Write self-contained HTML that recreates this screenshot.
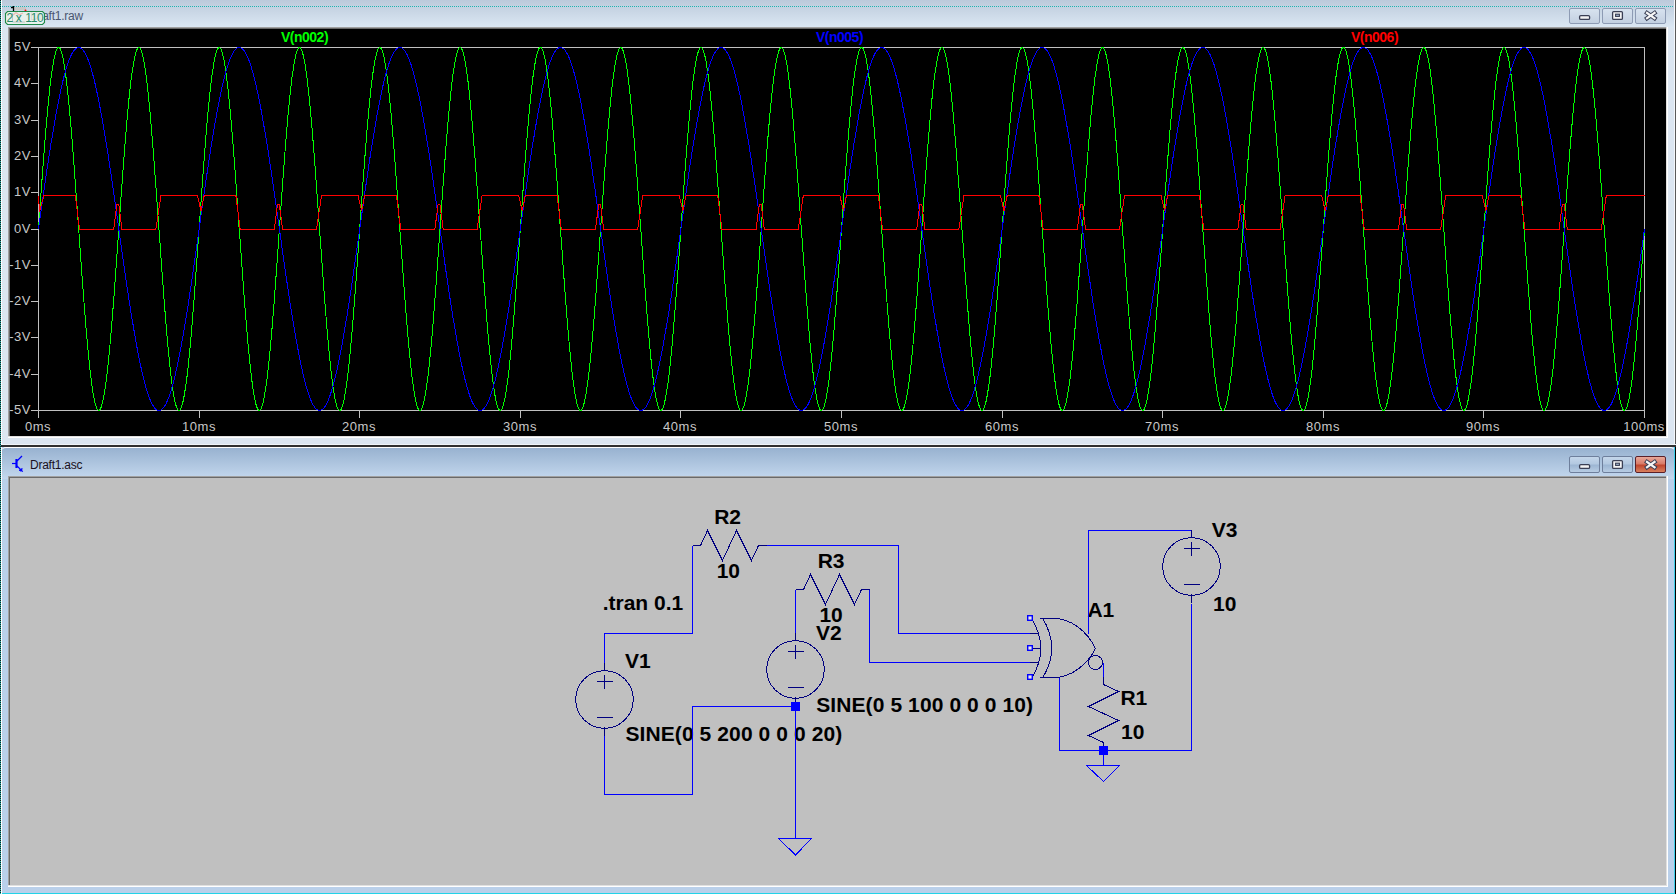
<!DOCTYPE html>
<html><head><meta charset="utf-8">
<style>
html,body{margin:0;padding:0;width:1676px;height:894px;overflow:hidden;background:#dce6f1;font-family:"Liberation Sans",sans-serif;position:relative}
.a{position:absolute}
.yl{position:absolute;right:1645px;width:40px;text-align:right;font-size:13px;line-height:16px;color:#c8c8c8;letter-spacing:0.5px}
.xl{position:absolute;top:419px;width:60px;margin-left:-30px;text-align:center;font-size:13px;line-height:16px;color:#c8c8c8;letter-spacing:0.5px}
.tb{position:absolute;top:8px;width:29px;height:14px;border:1px solid #8d9bb4;border-radius:2px;background:linear-gradient(#d7e2ef,#c3d0e1)}
.tb2{position:absolute;top:456px;width:29px;height:15px;border:1px solid #6e7f9c;border-radius:2px;background:linear-gradient(#c4d6ea 0%,#b3c9e1 45%,#9db6d3 55%,#b7cce3 100%)}
.sch{position:absolute;font-weight:bold;font-size:21px;line-height:22px;color:#000;white-space:nowrap}
</style></head><body>

<!-- ================= TOP WINDOW (waveform) ================= -->
<div class="a" style="left:0;top:0;width:1676px;height:446px;background:#dce6f1"></div>
<div class="a" style="left:0;top:0;width:1676px;height:28px;background:linear-gradient(#bccadb,#dce8f4)"></div>
<!-- dotted marquee line -->
<div class="a" style="left:2px;top:6px;width:1673px;height:1px;background:repeating-linear-gradient(90deg,#1fb5b0 0 1px,transparent 1px 2px)"></div>
<!-- title -->
<div class="a" style="left:30px;top:9px;font-size:12px;line-height:14px;color:#4a5670;letter-spacing:-0.25px">Draft1.raw</div>
<!-- app icon (partially hidden) -->
<svg class="a" style="left:8px;top:6px" width="22" height="20" viewBox="0 0 22 20">
  <rect x="6" y="1" width="12" height="3" fill="#c8c8c8"/>
  <path d="M3 1.5 H5.5 M5.5 0 V5" stroke="#000" stroke-width="1.3"/>
  <circle cx="17.5" cy="4.5" r="1" fill="#f00"/>
</svg>
<!-- screenshot size badge -->
<svg class="a" style="left:4px;top:10px" width="42" height="17" viewBox="0 0 42 17">
  <path d="M3.5 1.5 H38.5 L40.5 3.5 V12.5 L38.5 14.5 H3.5 L1.5 12.5 V3.5 Z" fill="rgba(236,244,236,0.85)" stroke="#1f8a4a" stroke-width="1.1"/>
  <path d="M9 5 L12 2.5 L15 5 L19 3" fill="none" stroke="rgba(240,150,140,0.6)" stroke-width="1.3"/>
  <path d="M8.5 3 V12 H21" fill="none" stroke="rgba(150,150,150,0.5)" stroke-width="1"/>
</svg>
<div class="a" style="left:0;top:10px;font-size:12px;line-height:16px;color:#2a8a6a;width:50px;height:16px">
<span class="a" style="left:6.6px">2</span><span class="a" style="left:15.7px">x</span><span class="a" style="left:25.2px">1</span><span class="a" style="left:30.8px">1</span><span class="a" style="left:37.1px">0</span>
</div>
<!-- buttons -->
<div class="tb" style="left:1569px"></div>
<div class="tb" style="left:1602px"></div>
<div class="tb" style="left:1635px"></div>
<svg class="a" style="left:1560px;top:0" width="116" height="28" viewBox="0 0 116 28"><rect x="19.6" y="15.6" width="10" height="3.8" rx="1.2" fill="#f4f4f4" stroke="#3a3f55" stroke-width="1.3"/><rect x="52.6" y="11.6" width="9.8" height="7.8" rx="1" fill="#f4f4f4" stroke="#3a3f55" stroke-width="1.3"/><rect x="55.6" y="14.2" width="3.8" height="2.2" fill="#a9bdd6" stroke="#3a3f55" stroke-width="1.1"/><path d="M87 12.9 L94.6 18.3 M94.6 12.9 L87 18.3" stroke="#3a3f55" stroke-width="4.2" stroke-linecap="square"/><path d="M87 12.9 L94.6 18.3 M94.6 12.9 L87 18.3" stroke="#f6f6f6" stroke-width="2.2" stroke-linecap="square"/></svg>
<!-- plot bevel -->
<div class="a" style="left:8px;top:27px;width:1660px;height:411px;background:#fff"></div>
<div class="a" style="left:8px;top:27px;width:1659px;height:410px;background:#e0e0e0"></div>
<div class="a" style="left:8px;top:27px;width:1658px;height:409px;background:#a0a0a0"></div>
<div class="a" style="left:9px;top:28px;width:1657px;height:408px;background:#696969"></div>
<div class="a" style="left:10px;top:29px;width:1656px;height:407px;background:#000"></div>
<!-- right border -->
<div class="a" style="left:1674px;top:0;width:1px;height:446px;background:#f4f7fb"></div>
<div class="a" style="left:1675px;top:0;width:1px;height:446px;background:#5a5a5a"></div>

<svg class="a" style="left:0;top:0" width="1676" height="446" viewBox="0 0 1676 446">
  <path d="M31 47.5 H1644.5 V410.5 H38.5 V47.5 M31 410.5 H38.5" fill="none" stroke="#c0c0c0" stroke-width="1" shape-rendering="crispEdges"/>
  <path d="M31 47.5 H38 M31 83.5 H38 M31 120.5 H38 M31 156.5 H38 M31 192.5 H38 M31 229.5 H38 M31 265.5 H38 M31 301.5 H38 M31 337.5 H38 M31 374.5 H38 M31 410.5 H38 M38.5 410 V418 M199.5 410 V418 M359.5 410 V418 M520.5 410 V418 M680.5 410 V418 M841.5 410 V418 M1002.5 410 V418 M1162.5 410 V418 M1323.5 410 V418 M1483.5 410 V418 M1644.5 410 V418" fill="none" stroke="#c0c0c0" stroke-width="1" shape-rendering="crispEdges"/>
  <path d="M38.5 229.0 L39.3 217.6 40.1 206.3 40.9 195.0 41.7 183.9 42.5 172.9 43.3 162.2 44.1 151.7 44.9 141.6 45.7 131.7 46.5 122.3 47.3 113.3 48.1 104.8 48.9 96.7 49.7 89.2 50.5 82.2 51.3 75.8 52.2 70.0 53.0 64.8 53.8 60.2 54.6 56.4 55.4 53.2 56.2 50.7 57.0 48.9 57.8 47.9 58.6 47.5 59.4 47.9 60.2 48.9 61.0 50.7 61.8 53.2 62.6 56.4 63.4 60.2 64.2 64.8 65.0 70.0 65.8 75.8 66.6 82.2 67.4 89.2 68.2 96.7 69.0 104.8 69.8 113.3 70.6 122.3 71.4 131.7 72.2 141.6 73.0 151.7 73.8 162.2 74.6 172.9 75.4 183.9 76.2 195.0 77.0 206.3 77.8 217.6 78.7 229.0 79.5 240.4 80.3 251.7 81.1 263.0 81.9 274.1 82.7 285.1 83.5 295.8 84.3 306.3 85.1 316.4 85.9 326.3 86.7 335.7 87.5 344.7 88.3 353.2 89.1 361.3 89.9 368.8 90.7 375.8 91.5 382.2 92.3 388.0 93.1 393.2 93.9 397.8 94.7 401.6 95.5 404.8 96.3 407.3 97.1 409.1 97.9 410.1 98.7 410.5 99.5 410.1 100.3 409.1 101.1 407.3 101.9 404.8 102.7 401.6 103.5 397.8 104.3 393.2 105.1 388.0 106.0 382.2 106.8 375.8 107.6 368.8 108.4 361.3 109.2 353.2 110.0 344.7 110.8 335.7 111.6 326.3 112.4 316.4 113.2 306.3 114.0 295.8 114.8 285.1 115.6 274.1 116.4 263.0 117.2 251.7 118.0 240.4 118.8 229.0 119.6 217.6 120.4 206.3 121.2 195.0 122.0 183.9 122.8 172.9 123.6 162.2 124.4 151.7 125.2 141.6 126.0 131.7 126.8 122.3 127.6 113.3 128.4 104.8 129.2 96.7 130.0 89.2 130.8 82.2 131.6 75.8 132.5 70.0 133.3 64.8 134.1 60.2 134.9 56.4 135.7 53.2 136.5 50.7 137.3 48.9 138.1 47.9 138.9 47.5 139.7 47.9 140.5 48.9 141.3 50.7 142.1 53.2 142.9 56.4 143.7 60.2 144.5 64.8 145.3 70.0 146.1 75.8 146.9 82.2 147.7 89.2 148.5 96.7 149.3 104.8 150.1 113.3 150.9 122.3 151.7 131.7 152.5 141.6 153.3 151.7 154.1 162.2 154.9 172.9 155.7 183.9 156.5 195.0 157.3 206.3 158.1 217.6 158.9 229.0 159.8 240.4 160.6 251.7 161.4 263.0 162.2 274.1 163.0 285.1 163.8 295.8 164.6 306.3 165.4 316.4 166.2 326.3 167.0 335.7 167.8 344.7 168.6 353.2 169.4 361.3 170.2 368.8 171.0 375.8 171.8 382.2 172.6 388.0 173.4 393.2 174.2 397.8 175.0 401.6 175.8 404.8 176.6 407.3 177.4 409.1 178.2 410.1 179.0 410.5 179.8 410.1 180.6 409.1 181.4 407.3 182.2 404.8 183.0 401.6 183.8 397.8 184.6 393.2 185.4 388.0 186.3 382.2 187.1 375.8 187.9 368.8 188.7 361.3 189.5 353.2 190.3 344.7 191.1 335.7 191.9 326.3 192.7 316.4 193.5 306.3 194.3 295.8 195.1 285.1 195.9 274.1 196.7 263.0 197.5 251.7 198.3 240.4 199.1 229.0 199.9 217.6 200.7 206.3 201.5 195.0 202.3 183.9 203.1 172.9 203.9 162.2 204.7 151.7 205.5 141.6 206.3 131.7 207.1 122.3 207.9 113.3 208.7 104.8 209.5 96.7 210.3 89.2 211.1 82.2 211.9 75.8 212.8 70.0 213.6 64.8 214.4 60.2 215.2 56.4 216.0 53.2 216.8 50.7 217.6 48.9 218.4 47.9 219.2 47.5 220.0 47.9 220.8 48.9 221.6 50.7 222.4 53.2 223.2 56.4 224.0 60.2 224.8 64.8 225.6 70.0 226.4 75.8 227.2 82.2 228.0 89.2 228.8 96.7 229.6 104.8 230.4 113.3 231.2 122.3 232.0 131.7 232.8 141.6 233.6 151.7 234.4 162.2 235.2 172.9 236.0 183.9 236.8 195.0 237.6 206.3 238.4 217.6 239.2 229.0 240.1 240.4 240.9 251.7 241.7 263.0 242.5 274.1 243.3 285.1 244.1 295.8 244.9 306.3 245.7 316.4 246.5 326.3 247.3 335.7 248.1 344.7 248.9 353.2 249.7 361.3 250.5 368.8 251.3 375.8 252.1 382.2 252.9 388.0 253.7 393.2 254.5 397.8 255.3 401.6 256.1 404.8 256.9 407.3 257.7 409.1 258.5 410.1 259.3 410.5 260.1 410.1 260.9 409.1 261.7 407.3 262.5 404.8 263.3 401.6 264.1 397.8 264.9 393.2 265.7 388.0 266.6 382.2 267.4 375.8 268.2 368.8 269.0 361.3 269.8 353.2 270.6 344.7 271.4 335.7 272.2 326.3 273.0 316.4 273.8 306.3 274.6 295.8 275.4 285.1 276.2 274.1 277.0 263.0 277.8 251.7 278.6 240.4 279.4 229.0 280.2 217.6 281.0 206.3 281.8 195.0 282.6 183.9 283.4 172.9 284.2 162.2 285.0 151.7 285.8 141.6 286.6 131.7 287.4 122.3 288.2 113.3 289.0 104.8 289.8 96.7 290.6 89.2 291.4 82.2 292.2 75.8 293.1 70.0 293.9 64.8 294.7 60.2 295.5 56.4 296.3 53.2 297.1 50.7 297.9 48.9 298.7 47.9 299.5 47.5 300.3 47.9 301.1 48.9 301.9 50.7 302.7 53.2 303.5 56.4 304.3 60.2 305.1 64.8 305.9 70.0 306.7 75.8 307.5 82.2 308.3 89.2 309.1 96.7 309.9 104.8 310.7 113.3 311.5 122.3 312.3 131.7 313.1 141.6 313.9 151.7 314.7 162.2 315.5 172.9 316.3 183.9 317.1 195.0 317.9 206.3 318.7 217.6 319.5 229.0 320.4 240.4 321.2 251.7 322.0 263.0 322.8 274.1 323.6 285.1 324.4 295.8 325.2 306.3 326.0 316.4 326.8 326.3 327.6 335.7 328.4 344.7 329.2 353.2 330.0 361.3 330.8 368.8 331.6 375.8 332.4 382.2 333.2 388.0 334.0 393.2 334.8 397.8 335.6 401.6 336.4 404.8 337.2 407.3 338.0 409.1 338.8 410.1 339.6 410.5 340.4 410.1 341.2 409.1 342.0 407.3 342.8 404.8 343.6 401.6 344.4 397.8 345.2 393.2 346.0 388.0 346.9 382.2 347.7 375.8 348.5 368.8 349.3 361.3 350.1 353.2 350.9 344.7 351.7 335.7 352.5 326.3 353.3 316.4 354.1 306.3 354.9 295.8 355.7 285.1 356.5 274.1 357.3 263.0 358.1 251.7 358.9 240.4 359.7 229.0 360.5 217.6 361.3 206.3 362.1 195.0 362.9 183.9 363.7 172.9 364.5 162.2 365.3 151.7 366.1 141.6 366.9 131.7 367.7 122.3 368.5 113.3 369.3 104.8 370.1 96.7 370.9 89.2 371.7 82.2 372.5 75.8 373.4 70.0 374.2 64.8 375.0 60.2 375.8 56.4 376.6 53.2 377.4 50.7 378.2 48.9 379.0 47.9 379.8 47.5 380.6 47.9 381.4 48.9 382.2 50.7 383.0 53.2 383.8 56.4 384.6 60.2 385.4 64.8 386.2 70.0 387.0 75.8 387.8 82.2 388.6 89.2 389.4 96.7 390.2 104.8 391.0 113.3 391.8 122.3 392.6 131.7 393.4 141.6 394.2 151.7 395.0 162.2 395.8 172.9 396.6 183.9 397.4 195.0 398.2 206.3 399.0 217.6 399.8 229.0 400.7 240.4 401.5 251.7 402.3 263.0 403.1 274.1 403.9 285.1 404.7 295.8 405.5 306.3 406.3 316.4 407.1 326.3 407.9 335.7 408.7 344.7 409.5 353.2 410.3 361.3 411.1 368.8 411.9 375.8 412.7 382.2 413.5 388.0 414.3 393.2 415.1 397.8 415.9 401.6 416.7 404.8 417.5 407.3 418.3 409.1 419.1 410.1 419.9 410.5 420.7 410.1 421.5 409.1 422.3 407.3 423.1 404.8 423.9 401.6 424.7 397.8 425.5 393.2 426.3 388.0 427.2 382.2 428.0 375.8 428.8 368.8 429.6 361.3 430.4 353.2 431.2 344.7 432.0 335.7 432.8 326.3 433.6 316.4 434.4 306.3 435.2 295.8 436.0 285.1 436.8 274.1 437.6 263.0 438.4 251.7 439.2 240.4 440.0 229.0 440.8 217.6 441.6 206.3 442.4 195.0 443.2 183.9 444.0 172.9 444.8 162.2 445.6 151.7 446.4 141.6 447.2 131.7 448.0 122.3 448.8 113.3 449.6 104.8 450.4 96.7 451.2 89.2 452.0 82.2 452.8 75.8 453.7 70.0 454.5 64.8 455.3 60.2 456.1 56.4 456.9 53.2 457.7 50.7 458.5 48.9 459.3 47.9 460.1 47.5 460.9 47.9 461.7 48.9 462.5 50.7 463.3 53.2 464.1 56.4 464.9 60.2 465.7 64.8 466.5 70.0 467.3 75.8 468.1 82.2 468.9 89.2 469.7 96.7 470.5 104.8 471.3 113.3 472.1 122.3 472.9 131.7 473.7 141.6 474.5 151.7 475.3 162.2 476.1 172.9 476.9 183.9 477.7 195.0 478.5 206.3 479.3 217.6 480.1 229.0 481.0 240.4 481.8 251.7 482.6 263.0 483.4 274.1 484.2 285.1 485.0 295.8 485.8 306.3 486.6 316.4 487.4 326.3 488.2 335.7 489.0 344.7 489.8 353.2 490.6 361.3 491.4 368.8 492.2 375.8 493.0 382.2 493.8 388.0 494.6 393.2 495.4 397.8 496.2 401.6 497.0 404.8 497.8 407.3 498.6 409.1 499.4 410.1 500.2 410.5 501.0 410.1 501.8 409.1 502.6 407.3 503.4 404.8 504.2 401.6 505.0 397.8 505.8 393.2 506.6 388.0 507.5 382.2 508.3 375.8 509.1 368.8 509.9 361.3 510.7 353.2 511.5 344.7 512.3 335.7 513.1 326.3 513.9 316.4 514.7 306.3 515.5 295.8 516.3 285.1 517.1 274.1 517.9 263.0 518.7 251.7 519.5 240.4 520.3 229.0 521.1 217.6 521.9 206.3 522.7 195.0 523.5 183.9 524.3 172.9 525.1 162.2 525.9 151.7 526.7 141.6 527.5 131.7 528.3 122.3 529.1 113.3 529.9 104.8 530.7 96.7 531.5 89.2 532.3 82.2 533.1 75.8 534.0 70.0 534.8 64.8 535.6 60.2 536.4 56.4 537.2 53.2 538.0 50.7 538.8 48.9 539.6 47.9 540.4 47.5 541.2 47.9 542.0 48.9 542.8 50.7 543.6 53.2 544.4 56.4 545.2 60.2 546.0 64.8 546.8 70.0 547.6 75.8 548.4 82.2 549.2 89.2 550.0 96.7 550.8 104.8 551.6 113.3 552.4 122.3 553.2 131.7 554.0 141.6 554.8 151.7 555.6 162.2 556.4 172.9 557.2 183.9 558.0 195.0 558.8 206.3 559.6 217.6 560.4 229.0 561.3 240.4 562.1 251.7 562.9 263.0 563.7 274.1 564.5 285.1 565.3 295.8 566.1 306.3 566.9 316.4 567.7 326.3 568.5 335.7 569.3 344.7 570.1 353.2 570.9 361.3 571.7 368.8 572.5 375.8 573.3 382.2 574.1 388.0 574.9 393.2 575.7 397.8 576.5 401.6 577.3 404.8 578.1 407.3 578.9 409.1 579.7 410.1 580.5 410.5 581.3 410.1 582.1 409.1 582.9 407.3 583.7 404.8 584.5 401.6 585.3 397.8 586.1 393.2 586.9 388.0 587.8 382.2 588.6 375.8 589.4 368.8 590.2 361.3 591.0 353.2 591.8 344.7 592.6 335.7 593.4 326.3 594.2 316.4 595.0 306.3 595.8 295.8 596.6 285.1 597.4 274.1 598.2 263.0 599.0 251.7 599.8 240.4 600.6 229.0 601.4 217.6 602.2 206.3 603.0 195.0 603.8 183.9 604.6 172.9 605.4 162.2 606.2 151.7 607.0 141.6 607.8 131.7 608.6 122.3 609.4 113.3 610.2 104.8 611.0 96.7 611.8 89.2 612.6 82.2 613.4 75.8 614.3 70.0 615.1 64.8 615.9 60.2 616.7 56.4 617.5 53.2 618.3 50.7 619.1 48.9 619.9 47.9 620.7 47.5 621.5 47.9 622.3 48.9 623.1 50.7 623.9 53.2 624.7 56.4 625.5 60.2 626.3 64.8 627.1 70.0 627.9 75.8 628.7 82.2 629.5 89.2 630.3 96.7 631.1 104.8 631.9 113.3 632.7 122.3 633.5 131.7 634.3 141.6 635.1 151.7 635.9 162.2 636.7 172.9 637.5 183.9 638.3 195.0 639.1 206.3 639.9 217.6 640.8 229.0 641.6 240.4 642.4 251.7 643.2 263.0 644.0 274.1 644.8 285.1 645.6 295.8 646.4 306.3 647.2 316.4 648.0 326.3 648.8 335.7 649.6 344.7 650.4 353.2 651.2 361.3 652.0 368.8 652.8 375.8 653.6 382.2 654.4 388.0 655.2 393.2 656.0 397.8 656.8 401.6 657.6 404.8 658.4 407.3 659.2 409.1 660.0 410.1 660.8 410.5 661.6 410.1 662.4 409.1 663.2 407.3 664.0 404.8 664.8 401.6 665.6 397.8 666.4 393.2 667.2 388.0 668.1 382.2 668.9 375.8 669.7 368.8 670.5 361.3 671.3 353.2 672.1 344.7 672.9 335.7 673.7 326.3 674.5 316.4 675.3 306.3 676.1 295.8 676.9 285.1 677.7 274.1 678.5 263.0 679.3 251.7 680.1 240.4 680.9 229.0 681.7 217.6 682.5 206.3 683.3 195.0 684.1 183.9 684.9 172.9 685.7 162.2 686.5 151.7 687.3 141.6 688.1 131.7 688.9 122.3 689.7 113.3 690.5 104.8 691.3 96.7 692.1 89.2 692.9 82.2 693.7 75.8 694.6 70.0 695.4 64.8 696.2 60.2 697.0 56.4 697.8 53.2 698.6 50.7 699.4 48.9 700.2 47.9 701.0 47.5 701.8 47.9 702.6 48.9 703.4 50.7 704.2 53.2 705.0 56.4 705.8 60.2 706.6 64.8 707.4 70.0 708.2 75.8 709.0 82.2 709.8 89.2 710.6 96.7 711.4 104.8 712.2 113.3 713.0 122.3 713.8 131.7 714.6 141.6 715.4 151.7 716.2 162.2 717.0 172.9 717.8 183.9 718.6 195.0 719.4 206.3 720.2 217.6 721.0 229.0 721.9 240.4 722.7 251.7 723.5 263.0 724.3 274.1 725.1 285.1 725.9 295.8 726.7 306.3 727.5 316.4 728.3 326.3 729.1 335.7 729.9 344.7 730.7 353.2 731.5 361.3 732.3 368.8 733.1 375.8 733.9 382.2 734.7 388.0 735.5 393.2 736.3 397.8 737.1 401.6 737.9 404.8 738.7 407.3 739.5 409.1 740.3 410.1 741.1 410.5 741.9 410.1 742.7 409.1 743.5 407.3 744.3 404.8 745.1 401.6 745.9 397.8 746.7 393.2 747.5 388.0 748.4 382.2 749.2 375.8 750.0 368.8 750.8 361.3 751.6 353.2 752.4 344.7 753.2 335.7 754.0 326.3 754.8 316.4 755.6 306.3 756.4 295.8 757.2 285.1 758.0 274.1 758.8 263.0 759.6 251.7 760.4 240.4 761.2 229.0 762.0 217.6 762.8 206.3 763.6 195.0 764.4 183.9 765.2 172.9 766.0 162.2 766.8 151.7 767.6 141.6 768.4 131.7 769.2 122.3 770.0 113.3 770.8 104.8 771.6 96.7 772.4 89.2 773.2 82.2 774.0 75.8 774.9 70.0 775.7 64.8 776.5 60.2 777.3 56.4 778.1 53.2 778.9 50.7 779.7 48.9 780.5 47.9 781.3 47.5 782.1 47.9 782.9 48.9 783.7 50.7 784.5 53.2 785.3 56.4 786.1 60.2 786.9 64.8 787.7 70.0 788.5 75.8 789.3 82.2 790.1 89.2 790.9 96.7 791.7 104.8 792.5 113.3 793.3 122.3 794.1 131.7 794.9 141.6 795.7 151.7 796.5 162.2 797.3 172.9 798.1 183.9 798.9 195.0 799.7 206.3 800.5 217.6 801.3 229.0 802.2 240.4 803.0 251.7 803.8 263.0 804.6 274.1 805.4 285.1 806.2 295.8 807.0 306.3 807.8 316.4 808.6 326.3 809.4 335.7 810.2 344.7 811.0 353.2 811.8 361.3 812.6 368.8 813.4 375.8 814.2 382.2 815.0 388.0 815.8 393.2 816.6 397.8 817.4 401.6 818.2 404.8 819.0 407.3 819.8 409.1 820.6 410.1 821.4 410.5 822.2 410.1 823.0 409.1 823.8 407.3 824.6 404.8 825.4 401.6 826.2 397.8 827.0 393.2 827.8 388.0 828.7 382.2 829.5 375.8 830.3 368.8 831.1 361.3 831.9 353.2 832.7 344.7 833.5 335.7 834.3 326.3 835.1 316.4 835.9 306.3 836.7 295.8 837.5 285.1 838.3 274.1 839.1 263.0 839.9 251.7 840.7 240.4 841.5 229.0 842.3 217.6 843.1 206.3 843.9 195.0 844.7 183.9 845.5 172.9 846.3 162.2 847.1 151.7 847.9 141.6 848.7 131.7 849.5 122.3 850.3 113.3 851.1 104.8 851.9 96.7 852.7 89.2 853.5 82.2 854.3 75.8 855.2 70.0 856.0 64.8 856.8 60.2 857.6 56.4 858.4 53.2 859.2 50.7 860.0 48.9 860.8 47.9 861.6 47.5 862.4 47.9 863.2 48.9 864.0 50.7 864.8 53.2 865.6 56.4 866.4 60.2 867.2 64.8 868.0 70.0 868.8 75.8 869.6 82.2 870.4 89.2 871.2 96.7 872.0 104.8 872.8 113.3 873.6 122.3 874.4 131.7 875.2 141.6 876.0 151.7 876.8 162.2 877.6 172.9 878.4 183.9 879.2 195.0 880.0 206.3 880.8 217.6 881.6 229.0 882.5 240.4 883.3 251.7 884.1 263.0 884.9 274.1 885.7 285.1 886.5 295.8 887.3 306.3 888.1 316.4 888.9 326.3 889.7 335.7 890.5 344.7 891.3 353.2 892.1 361.3 892.9 368.8 893.7 375.8 894.5 382.2 895.3 388.0 896.1 393.2 896.9 397.8 897.7 401.6 898.5 404.8 899.3 407.3 900.1 409.1 900.9 410.1 901.7 410.5 902.5 410.1 903.3 409.1 904.1 407.3 904.9 404.8 905.7 401.6 906.5 397.8 907.3 393.2 908.1 388.0 909.0 382.2 909.8 375.8 910.6 368.8 911.4 361.3 912.2 353.2 913.0 344.7 913.8 335.7 914.6 326.3 915.4 316.4 916.2 306.3 917.0 295.8 917.8 285.1 918.6 274.1 919.4 263.0 920.2 251.7 921.0 240.4 921.8 229.0 922.6 217.6 923.4 206.3 924.2 195.0 925.0 183.9 925.8 172.9 926.6 162.2 927.4 151.7 928.2 141.6 929.0 131.7 929.8 122.3 930.6 113.3 931.4 104.8 932.2 96.7 933.0 89.2 933.8 82.2 934.6 75.8 935.5 70.0 936.3 64.8 937.1 60.2 937.9 56.4 938.7 53.2 939.5 50.7 940.3 48.9 941.1 47.9 941.9 47.5 942.7 47.9 943.5 48.9 944.3 50.7 945.1 53.2 945.9 56.4 946.7 60.2 947.5 64.8 948.3 70.0 949.1 75.8 949.9 82.2 950.7 89.2 951.5 96.7 952.3 104.8 953.1 113.3 953.9 122.3 954.7 131.7 955.5 141.6 956.3 151.7 957.1 162.2 957.9 172.9 958.7 183.9 959.5 195.0 960.3 206.3 961.1 217.6 961.9 229.0 962.8 240.4 963.6 251.7 964.4 263.0 965.2 274.1 966.0 285.1 966.8 295.8 967.6 306.3 968.4 316.4 969.2 326.3 970.0 335.7 970.8 344.7 971.6 353.2 972.4 361.3 973.2 368.8 974.0 375.8 974.8 382.2 975.6 388.0 976.4 393.2 977.2 397.8 978.0 401.6 978.8 404.8 979.6 407.3 980.4 409.1 981.2 410.1 982.0 410.5 982.8 410.1 983.6 409.1 984.4 407.3 985.2 404.8 986.0 401.6 986.8 397.8 987.6 393.2 988.4 388.0 989.3 382.2 990.1 375.8 990.9 368.8 991.7 361.3 992.5 353.2 993.3 344.7 994.1 335.7 994.9 326.3 995.7 316.4 996.5 306.3 997.3 295.8 998.1 285.1 998.9 274.1 999.7 263.0 1000.5 251.7 1001.3 240.4 1002.1 229.0 1002.9 217.6 1003.7 206.3 1004.5 195.0 1005.3 183.9 1006.1 172.9 1006.9 162.2 1007.7 151.7 1008.5 141.6 1009.3 131.7 1010.1 122.3 1010.9 113.3 1011.7 104.8 1012.5 96.7 1013.3 89.2 1014.1 82.2 1014.9 75.8 1015.8 70.0 1016.6 64.8 1017.4 60.2 1018.2 56.4 1019.0 53.2 1019.8 50.7 1020.6 48.9 1021.4 47.9 1022.2 47.5 1023.0 47.9 1023.8 48.9 1024.6 50.7 1025.4 53.2 1026.2 56.4 1027.0 60.2 1027.8 64.8 1028.6 70.0 1029.4 75.8 1030.2 82.2 1031.0 89.2 1031.8 96.7 1032.6 104.8 1033.4 113.3 1034.2 122.3 1035.0 131.7 1035.8 141.6 1036.6 151.7 1037.4 162.2 1038.2 172.9 1039.0 183.9 1039.8 195.0 1040.6 206.3 1041.4 217.6 1042.2 229.0 1043.1 240.4 1043.9 251.7 1044.7 263.0 1045.5 274.1 1046.3 285.1 1047.1 295.8 1047.9 306.3 1048.7 316.4 1049.5 326.3 1050.3 335.7 1051.1 344.7 1051.9 353.2 1052.7 361.3 1053.5 368.8 1054.3 375.8 1055.1 382.2 1055.9 388.0 1056.7 393.2 1057.5 397.8 1058.3 401.6 1059.1 404.8 1059.9 407.3 1060.7 409.1 1061.5 410.1 1062.3 410.5 1063.1 410.1 1063.9 409.1 1064.7 407.3 1065.5 404.8 1066.3 401.6 1067.1 397.8 1067.9 393.2 1068.7 388.0 1069.6 382.2 1070.4 375.8 1071.2 368.8 1072.0 361.3 1072.8 353.2 1073.6 344.7 1074.4 335.7 1075.2 326.3 1076.0 316.4 1076.8 306.3 1077.6 295.8 1078.4 285.1 1079.2 274.1 1080.0 263.0 1080.8 251.7 1081.6 240.4 1082.4 229.0 1083.2 217.6 1084.0 206.3 1084.8 195.0 1085.6 183.9 1086.4 172.9 1087.2 162.2 1088.0 151.7 1088.8 141.6 1089.6 131.7 1090.4 122.3 1091.2 113.3 1092.0 104.8 1092.8 96.7 1093.6 89.2 1094.4 82.2 1095.2 75.8 1096.1 70.0 1096.9 64.8 1097.7 60.2 1098.5 56.4 1099.3 53.2 1100.1 50.7 1100.9 48.9 1101.7 47.9 1102.5 47.5 1103.3 47.9 1104.1 48.9 1104.9 50.7 1105.7 53.2 1106.5 56.4 1107.3 60.2 1108.1 64.8 1108.9 70.0 1109.7 75.8 1110.5 82.2 1111.3 89.2 1112.1 96.7 1112.9 104.8 1113.7 113.3 1114.5 122.3 1115.3 131.7 1116.1 141.6 1116.9 151.7 1117.7 162.2 1118.5 172.9 1119.3 183.9 1120.1 195.0 1120.9 206.3 1121.7 217.6 1122.5 229.0 1123.4 240.4 1124.2 251.7 1125.0 263.0 1125.8 274.1 1126.6 285.1 1127.4 295.8 1128.2 306.3 1129.0 316.4 1129.8 326.3 1130.6 335.7 1131.4 344.7 1132.2 353.2 1133.0 361.3 1133.8 368.8 1134.6 375.8 1135.4 382.2 1136.2 388.0 1137.0 393.2 1137.8 397.8 1138.6 401.6 1139.4 404.8 1140.2 407.3 1141.0 409.1 1141.8 410.1 1142.6 410.5 1143.4 410.1 1144.2 409.1 1145.0 407.3 1145.8 404.8 1146.6 401.6 1147.4 397.8 1148.2 393.2 1149.0 388.0 1149.9 382.2 1150.7 375.8 1151.5 368.8 1152.3 361.3 1153.1 353.2 1153.9 344.7 1154.7 335.7 1155.5 326.3 1156.3 316.4 1157.1 306.3 1157.9 295.8 1158.7 285.1 1159.5 274.1 1160.3 263.0 1161.1 251.7 1161.9 240.4 1162.7 229.0 1163.5 217.6 1164.3 206.3 1165.1 195.0 1165.9 183.9 1166.7 172.9 1167.5 162.2 1168.3 151.7 1169.1 141.6 1169.9 131.7 1170.7 122.3 1171.5 113.3 1172.3 104.8 1173.1 96.7 1173.9 89.2 1174.7 82.2 1175.5 75.8 1176.4 70.0 1177.2 64.8 1178.0 60.2 1178.8 56.4 1179.6 53.2 1180.4 50.7 1181.2 48.9 1182.0 47.9 1182.8 47.5 1183.6 47.9 1184.4 48.9 1185.2 50.7 1186.0 53.2 1186.8 56.4 1187.6 60.2 1188.4 64.8 1189.2 70.0 1190.0 75.8 1190.8 82.2 1191.6 89.2 1192.4 96.7 1193.2 104.8 1194.0 113.3 1194.8 122.3 1195.6 131.7 1196.4 141.6 1197.2 151.7 1198.0 162.2 1198.8 172.9 1199.6 183.9 1200.4 195.0 1201.2 206.3 1202.0 217.6 1202.8 229.0 1203.7 240.4 1204.5 251.7 1205.3 263.0 1206.1 274.1 1206.9 285.1 1207.7 295.8 1208.5 306.3 1209.3 316.4 1210.1 326.3 1210.9 335.7 1211.7 344.7 1212.5 353.2 1213.3 361.3 1214.1 368.8 1214.9 375.8 1215.7 382.2 1216.5 388.0 1217.3 393.2 1218.1 397.8 1218.9 401.6 1219.7 404.8 1220.5 407.3 1221.3 409.1 1222.1 410.1 1222.9 410.5 1223.7 410.1 1224.5 409.1 1225.3 407.3 1226.1 404.8 1226.9 401.6 1227.7 397.8 1228.5 393.2 1229.3 388.0 1230.2 382.2 1231.0 375.8 1231.8 368.8 1232.6 361.3 1233.4 353.2 1234.2 344.7 1235.0 335.7 1235.8 326.3 1236.6 316.4 1237.4 306.3 1238.2 295.8 1239.0 285.1 1239.8 274.1 1240.6 263.0 1241.4 251.7 1242.2 240.4 1243.0 229.0 1243.8 217.6 1244.6 206.3 1245.4 195.0 1246.2 183.9 1247.0 172.9 1247.8 162.2 1248.6 151.7 1249.4 141.6 1250.2 131.7 1251.0 122.3 1251.8 113.3 1252.6 104.8 1253.4 96.7 1254.2 89.2 1255.0 82.2 1255.8 75.8 1256.7 70.0 1257.5 64.8 1258.3 60.2 1259.1 56.4 1259.9 53.2 1260.7 50.7 1261.5 48.9 1262.3 47.9 1263.1 47.5 1263.9 47.9 1264.7 48.9 1265.5 50.7 1266.3 53.2 1267.1 56.4 1267.9 60.2 1268.7 64.8 1269.5 70.0 1270.3 75.8 1271.1 82.2 1271.9 89.2 1272.7 96.7 1273.5 104.8 1274.3 113.3 1275.1 122.3 1275.9 131.7 1276.7 141.6 1277.5 151.7 1278.3 162.2 1279.1 172.9 1279.9 183.9 1280.7 195.0 1281.5 206.3 1282.3 217.6 1283.1 229.0 1284.0 240.4 1284.8 251.7 1285.6 263.0 1286.4 274.1 1287.2 285.1 1288.0 295.8 1288.8 306.3 1289.6 316.4 1290.4 326.3 1291.2 335.7 1292.0 344.7 1292.8 353.2 1293.6 361.3 1294.4 368.8 1295.2 375.8 1296.0 382.2 1296.8 388.0 1297.6 393.2 1298.4 397.8 1299.2 401.6 1300.0 404.8 1300.8 407.3 1301.6 409.1 1302.4 410.1 1303.2 410.5 1304.0 410.1 1304.8 409.1 1305.6 407.3 1306.4 404.8 1307.2 401.6 1308.0 397.8 1308.8 393.2 1309.6 388.0 1310.5 382.2 1311.3 375.8 1312.1 368.8 1312.9 361.3 1313.7 353.2 1314.5 344.7 1315.3 335.7 1316.1 326.3 1316.9 316.4 1317.7 306.3 1318.5 295.8 1319.3 285.1 1320.1 274.1 1320.9 263.0 1321.7 251.7 1322.5 240.4 1323.3 229.0 1324.1 217.6 1324.9 206.3 1325.7 195.0 1326.5 183.9 1327.3 172.9 1328.1 162.2 1328.9 151.7 1329.7 141.6 1330.5 131.7 1331.3 122.3 1332.1 113.3 1332.9 104.8 1333.7 96.7 1334.5 89.2 1335.3 82.2 1336.1 75.8 1337.0 70.0 1337.8 64.8 1338.6 60.2 1339.4 56.4 1340.2 53.2 1341.0 50.7 1341.8 48.9 1342.6 47.9 1343.4 47.5 1344.2 47.9 1345.0 48.9 1345.8 50.7 1346.6 53.2 1347.4 56.4 1348.2 60.2 1349.0 64.8 1349.8 70.0 1350.6 75.8 1351.4 82.2 1352.2 89.2 1353.0 96.7 1353.8 104.8 1354.6 113.3 1355.4 122.3 1356.2 131.7 1357.0 141.6 1357.8 151.7 1358.6 162.2 1359.4 172.9 1360.2 183.9 1361.0 195.0 1361.8 206.3 1362.6 217.6 1363.4 229.0 1364.3 240.4 1365.1 251.7 1365.9 263.0 1366.7 274.1 1367.5 285.1 1368.3 295.8 1369.1 306.3 1369.9 316.4 1370.7 326.3 1371.5 335.7 1372.3 344.7 1373.1 353.2 1373.9 361.3 1374.7 368.8 1375.5 375.8 1376.3 382.2 1377.1 388.0 1377.9 393.2 1378.7 397.8 1379.5 401.6 1380.3 404.8 1381.1 407.3 1381.9 409.1 1382.7 410.1 1383.5 410.5 1384.3 410.1 1385.1 409.1 1385.9 407.3 1386.7 404.8 1387.5 401.6 1388.3 397.8 1389.1 393.2 1389.9 388.0 1390.8 382.2 1391.6 375.8 1392.4 368.8 1393.2 361.3 1394.0 353.2 1394.8 344.7 1395.6 335.7 1396.4 326.3 1397.2 316.4 1398.0 306.3 1398.8 295.8 1399.6 285.1 1400.4 274.1 1401.2 263.0 1402.0 251.7 1402.8 240.4 1403.6 229.0 1404.4 217.6 1405.2 206.3 1406.0 195.0 1406.8 183.9 1407.6 172.9 1408.4 162.2 1409.2 151.7 1410.0 141.6 1410.8 131.7 1411.6 122.3 1412.4 113.3 1413.2 104.8 1414.0 96.7 1414.8 89.2 1415.6 82.2 1416.4 75.8 1417.3 70.0 1418.1 64.8 1418.9 60.2 1419.7 56.4 1420.5 53.2 1421.3 50.7 1422.1 48.9 1422.9 47.9 1423.7 47.5 1424.5 47.9 1425.3 48.9 1426.1 50.7 1426.9 53.2 1427.7 56.4 1428.5 60.2 1429.3 64.8 1430.1 70.0 1430.9 75.8 1431.7 82.2 1432.5 89.2 1433.3 96.7 1434.1 104.8 1434.9 113.3 1435.7 122.3 1436.5 131.7 1437.3 141.6 1438.1 151.7 1438.9 162.2 1439.7 172.9 1440.5 183.9 1441.3 195.0 1442.1 206.3 1442.9 217.6 1443.8 229.0 1444.6 240.4 1445.4 251.7 1446.2 263.0 1447.0 274.1 1447.8 285.1 1448.6 295.8 1449.4 306.3 1450.2 316.4 1451.0 326.3 1451.8 335.7 1452.6 344.7 1453.4 353.2 1454.2 361.3 1455.0 368.8 1455.8 375.8 1456.6 382.2 1457.4 388.0 1458.2 393.2 1459.0 397.8 1459.8 401.6 1460.6 404.8 1461.4 407.3 1462.2 409.1 1463.0 410.1 1463.8 410.5 1464.6 410.1 1465.4 409.1 1466.2 407.3 1467.0 404.8 1467.8 401.6 1468.6 397.8 1469.4 393.2 1470.2 388.0 1471.1 382.2 1471.9 375.8 1472.7 368.8 1473.5 361.3 1474.3 353.2 1475.1 344.7 1475.9 335.7 1476.7 326.3 1477.5 316.4 1478.3 306.3 1479.1 295.8 1479.9 285.1 1480.7 274.1 1481.5 263.0 1482.3 251.7 1483.1 240.4 1483.9 229.0 1484.7 217.6 1485.5 206.3 1486.3 195.0 1487.1 183.9 1487.9 172.9 1488.7 162.2 1489.5 151.7 1490.3 141.6 1491.1 131.7 1491.9 122.3 1492.7 113.3 1493.5 104.8 1494.3 96.7 1495.1 89.2 1495.9 82.2 1496.7 75.8 1497.6 70.0 1498.4 64.8 1499.2 60.2 1500.0 56.4 1500.8 53.2 1501.6 50.7 1502.4 48.9 1503.2 47.9 1504.0 47.5 1504.8 47.9 1505.6 48.9 1506.4 50.7 1507.2 53.2 1508.0 56.4 1508.8 60.2 1509.6 64.8 1510.4 70.0 1511.2 75.8 1512.0 82.2 1512.8 89.2 1513.6 96.7 1514.4 104.8 1515.2 113.3 1516.0 122.3 1516.8 131.7 1517.6 141.6 1518.4 151.7 1519.2 162.2 1520.0 172.9 1520.8 183.9 1521.6 195.0 1522.4 206.3 1523.2 217.6 1524.0 229.0 1524.9 240.4 1525.7 251.7 1526.5 263.0 1527.3 274.1 1528.1 285.1 1528.9 295.8 1529.7 306.3 1530.5 316.4 1531.3 326.3 1532.1 335.7 1532.9 344.7 1533.7 353.2 1534.5 361.3 1535.3 368.8 1536.1 375.8 1536.9 382.2 1537.7 388.0 1538.5 393.2 1539.3 397.8 1540.1 401.6 1540.9 404.8 1541.7 407.3 1542.5 409.1 1543.3 410.1 1544.1 410.5 1544.9 410.1 1545.7 409.1 1546.5 407.3 1547.3 404.8 1548.1 401.6 1548.9 397.8 1549.7 393.2 1550.5 388.0 1551.4 382.2 1552.2 375.8 1553.0 368.8 1553.8 361.3 1554.6 353.2 1555.4 344.7 1556.2 335.7 1557.0 326.3 1557.8 316.4 1558.6 306.3 1559.4 295.8 1560.2 285.1 1561.0 274.1 1561.8 263.0 1562.6 251.7 1563.4 240.4 1564.2 229.0 1565.0 217.6 1565.8 206.3 1566.6 195.0 1567.4 183.9 1568.2 172.9 1569.0 162.2 1569.8 151.7 1570.6 141.6 1571.4 131.7 1572.2 122.3 1573.0 113.3 1573.8 104.8 1574.6 96.7 1575.4 89.2 1576.2 82.2 1577.0 75.8 1577.9 70.0 1578.7 64.8 1579.5 60.2 1580.3 56.4 1581.1 53.2 1581.9 50.7 1582.7 48.9 1583.5 47.9 1584.3 47.5 1585.1 47.9 1585.9 48.9 1586.7 50.7 1587.5 53.2 1588.3 56.4 1589.1 60.2 1589.9 64.8 1590.7 70.0 1591.5 75.8 1592.3 82.2 1593.1 89.2 1593.9 96.7 1594.7 104.8 1595.5 113.3 1596.3 122.3 1597.1 131.7 1597.9 141.6 1598.7 151.7 1599.5 162.2 1600.3 172.9 1601.1 183.9 1601.9 195.0 1602.7 206.3 1603.5 217.6 1604.3 229.0 1605.2 240.4 1606.0 251.7 1606.8 263.0 1607.6 274.1 1608.4 285.1 1609.2 295.8 1610.0 306.3 1610.8 316.4 1611.6 326.3 1612.4 335.7 1613.2 344.7 1614.0 353.2 1614.8 361.3 1615.6 368.8 1616.4 375.8 1617.2 382.2 1618.0 388.0 1618.8 393.2 1619.6 397.8 1620.4 401.6 1621.2 404.8 1622.0 407.3 1622.8 409.1 1623.6 410.1 1624.4 410.5 1625.2 410.1 1626.0 409.1 1626.8 407.3 1627.6 404.8 1628.4 401.6 1629.2 397.8 1630.0 393.2 1630.8 388.0 1631.7 382.2 1632.5 375.8 1633.3 368.8 1634.1 361.3 1634.9 353.2 1635.7 344.7 1636.5 335.7 1637.3 326.3 1638.1 316.4 1638.9 306.3 1639.7 295.8 1640.5 285.1 1641.3 274.1 1642.1 263.0 1642.9 251.7 1643.7 240.4 1644.5 229.0" fill="none" stroke="#00ff00" stroke-width="1" shape-rendering="crispEdges"/>
  <path d="M38.5 229.0 L39.3 223.3 40.1 217.6 40.9 211.9 41.7 206.3 42.5 200.6 43.3 195.0 44.1 189.4 44.9 183.9 45.7 178.4 46.5 172.9 47.3 167.5 48.1 162.2 48.9 156.9 49.7 151.7 50.5 146.6 51.3 141.6 52.2 136.6 53.0 131.7 53.8 127.0 54.6 122.3 55.4 117.8 56.2 113.3 57.0 109.0 57.8 104.8 58.6 100.7 59.4 96.7 60.2 92.9 61.0 89.2 61.8 85.6 62.6 82.2 63.4 78.9 64.2 75.8 65.0 72.8 65.8 70.0 66.6 67.3 67.4 64.8 68.2 62.4 69.0 60.2 69.8 58.2 70.6 56.4 71.4 54.7 72.2 53.2 73.0 51.9 73.8 50.7 74.6 49.7 75.4 48.9 76.2 48.3 77.0 47.9 77.8 47.6 78.7 47.5 79.5 47.6 80.3 47.9 81.1 48.3 81.9 48.9 82.7 49.7 83.5 50.7 84.3 51.9 85.1 53.2 85.9 54.7 86.7 56.4 87.5 58.2 88.3 60.2 89.1 62.4 89.9 64.8 90.7 67.3 91.5 70.0 92.3 72.8 93.1 75.8 93.9 78.9 94.7 82.2 95.5 85.6 96.3 89.2 97.1 92.9 97.9 96.7 98.7 100.7 99.5 104.8 100.3 109.0 101.1 113.3 101.9 117.8 102.7 122.3 103.5 127.0 104.3 131.7 105.1 136.6 106.0 141.6 106.8 146.6 107.6 151.7 108.4 156.9 109.2 162.2 110.0 167.5 110.8 172.9 111.6 178.4 112.4 183.9 113.2 189.4 114.0 195.0 114.8 200.6 115.6 206.3 116.4 211.9 117.2 217.6 118.0 223.3 118.8 229.0 119.6 234.7 120.4 240.4 121.2 246.1 122.0 251.7 122.8 257.4 123.6 263.0 124.4 268.6 125.2 274.1 126.0 279.6 126.8 285.1 127.6 290.5 128.4 295.8 129.2 301.1 130.0 306.3 130.8 311.4 131.6 316.4 132.5 321.4 133.3 326.3 134.1 331.0 134.9 335.7 135.7 340.2 136.5 344.7 137.3 349.0 138.1 353.2 138.9 357.3 139.7 361.3 140.5 365.1 141.3 368.8 142.1 372.4 142.9 375.8 143.7 379.1 144.5 382.2 145.3 385.2 146.1 388.0 146.9 390.7 147.7 393.2 148.5 395.6 149.3 397.8 150.1 399.8 150.9 401.6 151.7 403.3 152.5 404.8 153.3 406.1 154.1 407.3 154.9 408.3 155.7 409.1 156.5 409.7 157.3 410.1 158.1 410.4 158.9 410.5 159.8 410.4 160.6 410.1 161.4 409.7 162.2 409.1 163.0 408.3 163.8 407.3 164.6 406.1 165.4 404.8 166.2 403.3 167.0 401.6 167.8 399.8 168.6 397.8 169.4 395.6 170.2 393.2 171.0 390.7 171.8 388.0 172.6 385.2 173.4 382.2 174.2 379.1 175.0 375.8 175.8 372.4 176.6 368.8 177.4 365.1 178.2 361.3 179.0 357.3 179.8 353.2 180.6 349.0 181.4 344.7 182.2 340.2 183.0 335.7 183.8 331.0 184.6 326.3 185.4 321.4 186.3 316.4 187.1 311.4 187.9 306.3 188.7 301.1 189.5 295.8 190.3 290.5 191.1 285.1 191.9 279.6 192.7 274.1 193.5 268.6 194.3 263.0 195.1 257.4 195.9 251.7 196.7 246.1 197.5 240.4 198.3 234.7 199.1 229.0 199.9 223.3 200.7 217.6 201.5 211.9 202.3 206.3 203.1 200.6 203.9 195.0 204.7 189.4 205.5 183.9 206.3 178.4 207.1 172.9 207.9 167.5 208.7 162.2 209.5 156.9 210.3 151.7 211.1 146.6 211.9 141.6 212.8 136.6 213.6 131.7 214.4 127.0 215.2 122.3 216.0 117.8 216.8 113.3 217.6 109.0 218.4 104.8 219.2 100.7 220.0 96.7 220.8 92.9 221.6 89.2 222.4 85.6 223.2 82.2 224.0 78.9 224.8 75.8 225.6 72.8 226.4 70.0 227.2 67.3 228.0 64.8 228.8 62.4 229.6 60.2 230.4 58.2 231.2 56.4 232.0 54.7 232.8 53.2 233.6 51.9 234.4 50.7 235.2 49.7 236.0 48.9 236.8 48.3 237.6 47.9 238.4 47.6 239.2 47.5 240.1 47.6 240.9 47.9 241.7 48.3 242.5 48.9 243.3 49.7 244.1 50.7 244.9 51.9 245.7 53.2 246.5 54.7 247.3 56.4 248.1 58.2 248.9 60.2 249.7 62.4 250.5 64.8 251.3 67.3 252.1 70.0 252.9 72.8 253.7 75.8 254.5 78.9 255.3 82.2 256.1 85.6 256.9 89.2 257.7 92.9 258.5 96.7 259.3 100.7 260.1 104.8 260.9 109.0 261.7 113.3 262.5 117.8 263.3 122.3 264.1 127.0 264.9 131.7 265.7 136.6 266.6 141.6 267.4 146.6 268.2 151.7 269.0 156.9 269.8 162.2 270.6 167.5 271.4 172.9 272.2 178.4 273.0 183.9 273.8 189.4 274.6 195.0 275.4 200.6 276.2 206.3 277.0 211.9 277.8 217.6 278.6 223.3 279.4 229.0 280.2 234.7 281.0 240.4 281.8 246.1 282.6 251.7 283.4 257.4 284.2 263.0 285.0 268.6 285.8 274.1 286.6 279.6 287.4 285.1 288.2 290.5 289.0 295.8 289.8 301.1 290.6 306.3 291.4 311.4 292.2 316.4 293.1 321.4 293.9 326.3 294.7 331.0 295.5 335.7 296.3 340.2 297.1 344.7 297.9 349.0 298.7 353.2 299.5 357.3 300.3 361.3 301.1 365.1 301.9 368.8 302.7 372.4 303.5 375.8 304.3 379.1 305.1 382.2 305.9 385.2 306.7 388.0 307.5 390.7 308.3 393.2 309.1 395.6 309.9 397.8 310.7 399.8 311.5 401.6 312.3 403.3 313.1 404.8 313.9 406.1 314.7 407.3 315.5 408.3 316.3 409.1 317.1 409.7 317.9 410.1 318.7 410.4 319.5 410.5 320.4 410.4 321.2 410.1 322.0 409.7 322.8 409.1 323.6 408.3 324.4 407.3 325.2 406.1 326.0 404.8 326.8 403.3 327.6 401.6 328.4 399.8 329.2 397.8 330.0 395.6 330.8 393.2 331.6 390.7 332.4 388.0 333.2 385.2 334.0 382.2 334.8 379.1 335.6 375.8 336.4 372.4 337.2 368.8 338.0 365.1 338.8 361.3 339.6 357.3 340.4 353.2 341.2 349.0 342.0 344.7 342.8 340.2 343.6 335.7 344.4 331.0 345.2 326.3 346.0 321.4 346.9 316.4 347.7 311.4 348.5 306.3 349.3 301.1 350.1 295.8 350.9 290.5 351.7 285.1 352.5 279.6 353.3 274.1 354.1 268.6 354.9 263.0 355.7 257.4 356.5 251.7 357.3 246.1 358.1 240.4 358.9 234.7 359.7 229.0 360.5 223.3 361.3 217.6 362.1 211.9 362.9 206.3 363.7 200.6 364.5 195.0 365.3 189.4 366.1 183.9 366.9 178.4 367.7 172.9 368.5 167.5 369.3 162.2 370.1 156.9 370.9 151.7 371.7 146.6 372.5 141.6 373.4 136.6 374.2 131.7 375.0 127.0 375.8 122.3 376.6 117.8 377.4 113.3 378.2 109.0 379.0 104.8 379.8 100.7 380.6 96.7 381.4 92.9 382.2 89.2 383.0 85.6 383.8 82.2 384.6 78.9 385.4 75.8 386.2 72.8 387.0 70.0 387.8 67.3 388.6 64.8 389.4 62.4 390.2 60.2 391.0 58.2 391.8 56.4 392.6 54.7 393.4 53.2 394.2 51.9 395.0 50.7 395.8 49.7 396.6 48.9 397.4 48.3 398.2 47.9 399.0 47.6 399.8 47.5 400.7 47.6 401.5 47.9 402.3 48.3 403.1 48.9 403.9 49.7 404.7 50.7 405.5 51.9 406.3 53.2 407.1 54.7 407.9 56.4 408.7 58.2 409.5 60.2 410.3 62.4 411.1 64.8 411.9 67.3 412.7 70.0 413.5 72.8 414.3 75.8 415.1 78.9 415.9 82.2 416.7 85.6 417.5 89.2 418.3 92.9 419.1 96.7 419.9 100.7 420.7 104.8 421.5 109.0 422.3 113.3 423.1 117.8 423.9 122.3 424.7 127.0 425.5 131.7 426.3 136.6 427.2 141.6 428.0 146.6 428.8 151.7 429.6 156.9 430.4 162.2 431.2 167.5 432.0 172.9 432.8 178.4 433.6 183.9 434.4 189.4 435.2 195.0 436.0 200.6 436.8 206.3 437.6 211.9 438.4 217.6 439.2 223.3 440.0 229.0 440.8 234.7 441.6 240.4 442.4 246.1 443.2 251.7 444.0 257.4 444.8 263.0 445.6 268.6 446.4 274.1 447.2 279.6 448.0 285.1 448.8 290.5 449.6 295.8 450.4 301.1 451.2 306.3 452.0 311.4 452.8 316.4 453.7 321.4 454.5 326.3 455.3 331.0 456.1 335.7 456.9 340.2 457.7 344.7 458.5 349.0 459.3 353.2 460.1 357.3 460.9 361.3 461.7 365.1 462.5 368.8 463.3 372.4 464.1 375.8 464.9 379.1 465.7 382.2 466.5 385.2 467.3 388.0 468.1 390.7 468.9 393.2 469.7 395.6 470.5 397.8 471.3 399.8 472.1 401.6 472.9 403.3 473.7 404.8 474.5 406.1 475.3 407.3 476.1 408.3 476.9 409.1 477.7 409.7 478.5 410.1 479.3 410.4 480.1 410.5 481.0 410.4 481.8 410.1 482.6 409.7 483.4 409.1 484.2 408.3 485.0 407.3 485.8 406.1 486.6 404.8 487.4 403.3 488.2 401.6 489.0 399.8 489.8 397.8 490.6 395.6 491.4 393.2 492.2 390.7 493.0 388.0 493.8 385.2 494.6 382.2 495.4 379.1 496.2 375.8 497.0 372.4 497.8 368.8 498.6 365.1 499.4 361.3 500.2 357.3 501.0 353.2 501.8 349.0 502.6 344.7 503.4 340.2 504.2 335.7 505.0 331.0 505.8 326.3 506.6 321.4 507.5 316.4 508.3 311.4 509.1 306.3 509.9 301.1 510.7 295.8 511.5 290.5 512.3 285.1 513.1 279.6 513.9 274.1 514.7 268.6 515.5 263.0 516.3 257.4 517.1 251.7 517.9 246.1 518.7 240.4 519.5 234.7 520.3 229.0 521.1 223.3 521.9 217.6 522.7 211.9 523.5 206.3 524.3 200.6 525.1 195.0 525.9 189.4 526.7 183.9 527.5 178.4 528.3 172.9 529.1 167.5 529.9 162.2 530.7 156.9 531.5 151.7 532.3 146.6 533.1 141.6 534.0 136.6 534.8 131.7 535.6 127.0 536.4 122.3 537.2 117.8 538.0 113.3 538.8 109.0 539.6 104.8 540.4 100.7 541.2 96.7 542.0 92.9 542.8 89.2 543.6 85.6 544.4 82.2 545.2 78.9 546.0 75.8 546.8 72.8 547.6 70.0 548.4 67.3 549.2 64.8 550.0 62.4 550.8 60.2 551.6 58.2 552.4 56.4 553.2 54.7 554.0 53.2 554.8 51.9 555.6 50.7 556.4 49.7 557.2 48.9 558.0 48.3 558.8 47.9 559.6 47.6 560.4 47.5 561.3 47.6 562.1 47.9 562.9 48.3 563.7 48.9 564.5 49.7 565.3 50.7 566.1 51.9 566.9 53.2 567.7 54.7 568.5 56.4 569.3 58.2 570.1 60.2 570.9 62.4 571.7 64.8 572.5 67.3 573.3 70.0 574.1 72.8 574.9 75.8 575.7 78.9 576.5 82.2 577.3 85.6 578.1 89.2 578.9 92.9 579.7 96.7 580.5 100.7 581.3 104.8 582.1 109.0 582.9 113.3 583.7 117.8 584.5 122.3 585.3 127.0 586.1 131.7 586.9 136.6 587.8 141.6 588.6 146.6 589.4 151.7 590.2 156.9 591.0 162.2 591.8 167.5 592.6 172.9 593.4 178.4 594.2 183.9 595.0 189.4 595.8 195.0 596.6 200.6 597.4 206.3 598.2 211.9 599.0 217.6 599.8 223.3 600.6 229.0 601.4 234.7 602.2 240.4 603.0 246.1 603.8 251.7 604.6 257.4 605.4 263.0 606.2 268.6 607.0 274.1 607.8 279.6 608.6 285.1 609.4 290.5 610.2 295.8 611.0 301.1 611.8 306.3 612.6 311.4 613.4 316.4 614.3 321.4 615.1 326.3 615.9 331.0 616.7 335.7 617.5 340.2 618.3 344.7 619.1 349.0 619.9 353.2 620.7 357.3 621.5 361.3 622.3 365.1 623.1 368.8 623.9 372.4 624.7 375.8 625.5 379.1 626.3 382.2 627.1 385.2 627.9 388.0 628.7 390.7 629.5 393.2 630.3 395.6 631.1 397.8 631.9 399.8 632.7 401.6 633.5 403.3 634.3 404.8 635.1 406.1 635.9 407.3 636.7 408.3 637.5 409.1 638.3 409.7 639.1 410.1 639.9 410.4 640.8 410.5 641.6 410.4 642.4 410.1 643.2 409.7 644.0 409.1 644.8 408.3 645.6 407.3 646.4 406.1 647.2 404.8 648.0 403.3 648.8 401.6 649.6 399.8 650.4 397.8 651.2 395.6 652.0 393.2 652.8 390.7 653.6 388.0 654.4 385.2 655.2 382.2 656.0 379.1 656.8 375.8 657.6 372.4 658.4 368.8 659.2 365.1 660.0 361.3 660.8 357.3 661.6 353.2 662.4 349.0 663.2 344.7 664.0 340.2 664.8 335.7 665.6 331.0 666.4 326.3 667.2 321.4 668.1 316.4 668.9 311.4 669.7 306.3 670.5 301.1 671.3 295.8 672.1 290.5 672.9 285.1 673.7 279.6 674.5 274.1 675.3 268.6 676.1 263.0 676.9 257.4 677.7 251.7 678.5 246.1 679.3 240.4 680.1 234.7 680.9 229.0 681.7 223.3 682.5 217.6 683.3 211.9 684.1 206.3 684.9 200.6 685.7 195.0 686.5 189.4 687.3 183.9 688.1 178.4 688.9 172.9 689.7 167.5 690.5 162.2 691.3 156.9 692.1 151.7 692.9 146.6 693.7 141.6 694.6 136.6 695.4 131.7 696.2 127.0 697.0 122.3 697.8 117.8 698.6 113.3 699.4 109.0 700.2 104.8 701.0 100.7 701.8 96.7 702.6 92.9 703.4 89.2 704.2 85.6 705.0 82.2 705.8 78.9 706.6 75.8 707.4 72.8 708.2 70.0 709.0 67.3 709.8 64.8 710.6 62.4 711.4 60.2 712.2 58.2 713.0 56.4 713.8 54.7 714.6 53.2 715.4 51.9 716.2 50.7 717.0 49.7 717.8 48.9 718.6 48.3 719.4 47.9 720.2 47.6 721.0 47.5 721.9 47.6 722.7 47.9 723.5 48.3 724.3 48.9 725.1 49.7 725.9 50.7 726.7 51.9 727.5 53.2 728.3 54.7 729.1 56.4 729.9 58.2 730.7 60.2 731.5 62.4 732.3 64.8 733.1 67.3 733.9 70.0 734.7 72.8 735.5 75.8 736.3 78.9 737.1 82.2 737.9 85.6 738.7 89.2 739.5 92.9 740.3 96.7 741.1 100.7 741.9 104.8 742.7 109.0 743.5 113.3 744.3 117.8 745.1 122.3 745.9 127.0 746.7 131.7 747.5 136.6 748.4 141.6 749.2 146.6 750.0 151.7 750.8 156.9 751.6 162.2 752.4 167.5 753.2 172.9 754.0 178.4 754.8 183.9 755.6 189.4 756.4 195.0 757.2 200.6 758.0 206.3 758.8 211.9 759.6 217.6 760.4 223.3 761.2 229.0 762.0 234.7 762.8 240.4 763.6 246.1 764.4 251.7 765.2 257.4 766.0 263.0 766.8 268.6 767.6 274.1 768.4 279.6 769.2 285.1 770.0 290.5 770.8 295.8 771.6 301.1 772.4 306.3 773.2 311.4 774.0 316.4 774.9 321.4 775.7 326.3 776.5 331.0 777.3 335.7 778.1 340.2 778.9 344.7 779.7 349.0 780.5 353.2 781.3 357.3 782.1 361.3 782.9 365.1 783.7 368.8 784.5 372.4 785.3 375.8 786.1 379.1 786.9 382.2 787.7 385.2 788.5 388.0 789.3 390.7 790.1 393.2 790.9 395.6 791.7 397.8 792.5 399.8 793.3 401.6 794.1 403.3 794.9 404.8 795.7 406.1 796.5 407.3 797.3 408.3 798.1 409.1 798.9 409.7 799.7 410.1 800.5 410.4 801.3 410.5 802.2 410.4 803.0 410.1 803.8 409.7 804.6 409.1 805.4 408.3 806.2 407.3 807.0 406.1 807.8 404.8 808.6 403.3 809.4 401.6 810.2 399.8 811.0 397.8 811.8 395.6 812.6 393.2 813.4 390.7 814.2 388.0 815.0 385.2 815.8 382.2 816.6 379.1 817.4 375.8 818.2 372.4 819.0 368.8 819.8 365.1 820.6 361.3 821.4 357.3 822.2 353.2 823.0 349.0 823.8 344.7 824.6 340.2 825.4 335.7 826.2 331.0 827.0 326.3 827.8 321.4 828.7 316.4 829.5 311.4 830.3 306.3 831.1 301.1 831.9 295.8 832.7 290.5 833.5 285.1 834.3 279.6 835.1 274.1 835.9 268.6 836.7 263.0 837.5 257.4 838.3 251.7 839.1 246.1 839.9 240.4 840.7 234.7 841.5 229.0 842.3 223.3 843.1 217.6 843.9 211.9 844.7 206.3 845.5 200.6 846.3 195.0 847.1 189.4 847.9 183.9 848.7 178.4 849.5 172.9 850.3 167.5 851.1 162.2 851.9 156.9 852.7 151.7 853.5 146.6 854.3 141.6 855.2 136.6 856.0 131.7 856.8 127.0 857.6 122.3 858.4 117.8 859.2 113.3 860.0 109.0 860.8 104.8 861.6 100.7 862.4 96.7 863.2 92.9 864.0 89.2 864.8 85.6 865.6 82.2 866.4 78.9 867.2 75.8 868.0 72.8 868.8 70.0 869.6 67.3 870.4 64.8 871.2 62.4 872.0 60.2 872.8 58.2 873.6 56.4 874.4 54.7 875.2 53.2 876.0 51.9 876.8 50.7 877.6 49.7 878.4 48.9 879.2 48.3 880.0 47.9 880.8 47.6 881.6 47.5 882.5 47.6 883.3 47.9 884.1 48.3 884.9 48.9 885.7 49.7 886.5 50.7 887.3 51.9 888.1 53.2 888.9 54.7 889.7 56.4 890.5 58.2 891.3 60.2 892.1 62.4 892.9 64.8 893.7 67.3 894.5 70.0 895.3 72.8 896.1 75.8 896.9 78.9 897.7 82.2 898.5 85.6 899.3 89.2 900.1 92.9 900.9 96.7 901.7 100.7 902.5 104.8 903.3 109.0 904.1 113.3 904.9 117.8 905.7 122.3 906.5 127.0 907.3 131.7 908.1 136.6 909.0 141.6 909.8 146.6 910.6 151.7 911.4 156.9 912.2 162.2 913.0 167.5 913.8 172.9 914.6 178.4 915.4 183.9 916.2 189.4 917.0 195.0 917.8 200.6 918.6 206.3 919.4 211.9 920.2 217.6 921.0 223.3 921.8 229.0 922.6 234.7 923.4 240.4 924.2 246.1 925.0 251.7 925.8 257.4 926.6 263.0 927.4 268.6 928.2 274.1 929.0 279.6 929.8 285.1 930.6 290.5 931.4 295.8 932.2 301.1 933.0 306.3 933.8 311.4 934.6 316.4 935.5 321.4 936.3 326.3 937.1 331.0 937.9 335.7 938.7 340.2 939.5 344.7 940.3 349.0 941.1 353.2 941.9 357.3 942.7 361.3 943.5 365.1 944.3 368.8 945.1 372.4 945.9 375.8 946.7 379.1 947.5 382.2 948.3 385.2 949.1 388.0 949.9 390.7 950.7 393.2 951.5 395.6 952.3 397.8 953.1 399.8 953.9 401.6 954.7 403.3 955.5 404.8 956.3 406.1 957.1 407.3 957.9 408.3 958.7 409.1 959.5 409.7 960.3 410.1 961.1 410.4 961.9 410.5 962.8 410.4 963.6 410.1 964.4 409.7 965.2 409.1 966.0 408.3 966.8 407.3 967.6 406.1 968.4 404.8 969.2 403.3 970.0 401.6 970.8 399.8 971.6 397.8 972.4 395.6 973.2 393.2 974.0 390.7 974.8 388.0 975.6 385.2 976.4 382.2 977.2 379.1 978.0 375.8 978.8 372.4 979.6 368.8 980.4 365.1 981.2 361.3 982.0 357.3 982.8 353.2 983.6 349.0 984.4 344.7 985.2 340.2 986.0 335.7 986.8 331.0 987.6 326.3 988.4 321.4 989.3 316.4 990.1 311.4 990.9 306.3 991.7 301.1 992.5 295.8 993.3 290.5 994.1 285.1 994.9 279.6 995.7 274.1 996.5 268.6 997.3 263.0 998.1 257.4 998.9 251.7 999.7 246.1 1000.5 240.4 1001.3 234.7 1002.1 229.0 1002.9 223.3 1003.7 217.6 1004.5 211.9 1005.3 206.3 1006.1 200.6 1006.9 195.0 1007.7 189.4 1008.5 183.9 1009.3 178.4 1010.1 172.9 1010.9 167.5 1011.7 162.2 1012.5 156.9 1013.3 151.7 1014.1 146.6 1014.9 141.6 1015.8 136.6 1016.6 131.7 1017.4 127.0 1018.2 122.3 1019.0 117.8 1019.8 113.3 1020.6 109.0 1021.4 104.8 1022.2 100.7 1023.0 96.7 1023.8 92.9 1024.6 89.2 1025.4 85.6 1026.2 82.2 1027.0 78.9 1027.8 75.8 1028.6 72.8 1029.4 70.0 1030.2 67.3 1031.0 64.8 1031.8 62.4 1032.6 60.2 1033.4 58.2 1034.2 56.4 1035.0 54.7 1035.8 53.2 1036.6 51.9 1037.4 50.7 1038.2 49.7 1039.0 48.9 1039.8 48.3 1040.6 47.9 1041.4 47.6 1042.2 47.5 1043.1 47.6 1043.9 47.9 1044.7 48.3 1045.5 48.9 1046.3 49.7 1047.1 50.7 1047.9 51.9 1048.7 53.2 1049.5 54.7 1050.3 56.4 1051.1 58.2 1051.9 60.2 1052.7 62.4 1053.5 64.8 1054.3 67.3 1055.1 70.0 1055.9 72.8 1056.7 75.8 1057.5 78.9 1058.3 82.2 1059.1 85.6 1059.9 89.2 1060.7 92.9 1061.5 96.7 1062.3 100.7 1063.1 104.8 1063.9 109.0 1064.7 113.3 1065.5 117.8 1066.3 122.3 1067.1 127.0 1067.9 131.7 1068.7 136.6 1069.6 141.6 1070.4 146.6 1071.2 151.7 1072.0 156.9 1072.8 162.2 1073.6 167.5 1074.4 172.9 1075.2 178.4 1076.0 183.9 1076.8 189.4 1077.6 195.0 1078.4 200.6 1079.2 206.3 1080.0 211.9 1080.8 217.6 1081.6 223.3 1082.4 229.0 1083.2 234.7 1084.0 240.4 1084.8 246.1 1085.6 251.7 1086.4 257.4 1087.2 263.0 1088.0 268.6 1088.8 274.1 1089.6 279.6 1090.4 285.1 1091.2 290.5 1092.0 295.8 1092.8 301.1 1093.6 306.3 1094.4 311.4 1095.2 316.4 1096.1 321.4 1096.9 326.3 1097.7 331.0 1098.5 335.7 1099.3 340.2 1100.1 344.7 1100.9 349.0 1101.7 353.2 1102.5 357.3 1103.3 361.3 1104.1 365.1 1104.9 368.8 1105.7 372.4 1106.5 375.8 1107.3 379.1 1108.1 382.2 1108.9 385.2 1109.7 388.0 1110.5 390.7 1111.3 393.2 1112.1 395.6 1112.9 397.8 1113.7 399.8 1114.5 401.6 1115.3 403.3 1116.1 404.8 1116.9 406.1 1117.7 407.3 1118.5 408.3 1119.3 409.1 1120.1 409.7 1120.9 410.1 1121.7 410.4 1122.5 410.5 1123.4 410.4 1124.2 410.1 1125.0 409.7 1125.8 409.1 1126.6 408.3 1127.4 407.3 1128.2 406.1 1129.0 404.8 1129.8 403.3 1130.6 401.6 1131.4 399.8 1132.2 397.8 1133.0 395.6 1133.8 393.2 1134.6 390.7 1135.4 388.0 1136.2 385.2 1137.0 382.2 1137.8 379.1 1138.6 375.8 1139.4 372.4 1140.2 368.8 1141.0 365.1 1141.8 361.3 1142.6 357.3 1143.4 353.2 1144.2 349.0 1145.0 344.7 1145.8 340.2 1146.6 335.7 1147.4 331.0 1148.2 326.3 1149.0 321.4 1149.9 316.4 1150.7 311.4 1151.5 306.3 1152.3 301.1 1153.1 295.8 1153.9 290.5 1154.7 285.1 1155.5 279.6 1156.3 274.1 1157.1 268.6 1157.9 263.0 1158.7 257.4 1159.5 251.7 1160.3 246.1 1161.1 240.4 1161.9 234.7 1162.7 229.0 1163.5 223.3 1164.3 217.6 1165.1 211.9 1165.9 206.3 1166.7 200.6 1167.5 195.0 1168.3 189.4 1169.1 183.9 1169.9 178.4 1170.7 172.9 1171.5 167.5 1172.3 162.2 1173.1 156.9 1173.9 151.7 1174.7 146.6 1175.5 141.6 1176.4 136.6 1177.2 131.7 1178.0 127.0 1178.8 122.3 1179.6 117.8 1180.4 113.3 1181.2 109.0 1182.0 104.8 1182.8 100.7 1183.6 96.7 1184.4 92.9 1185.2 89.2 1186.0 85.6 1186.8 82.2 1187.6 78.9 1188.4 75.8 1189.2 72.8 1190.0 70.0 1190.8 67.3 1191.6 64.8 1192.4 62.4 1193.2 60.2 1194.0 58.2 1194.8 56.4 1195.6 54.7 1196.4 53.2 1197.2 51.9 1198.0 50.7 1198.8 49.7 1199.6 48.9 1200.4 48.3 1201.2 47.9 1202.0 47.6 1202.8 47.5 1203.7 47.6 1204.5 47.9 1205.3 48.3 1206.1 48.9 1206.9 49.7 1207.7 50.7 1208.5 51.9 1209.3 53.2 1210.1 54.7 1210.9 56.4 1211.7 58.2 1212.5 60.2 1213.3 62.4 1214.1 64.8 1214.9 67.3 1215.7 70.0 1216.5 72.8 1217.3 75.8 1218.1 78.9 1218.9 82.2 1219.7 85.6 1220.5 89.2 1221.3 92.9 1222.1 96.7 1222.9 100.7 1223.7 104.8 1224.5 109.0 1225.3 113.3 1226.1 117.8 1226.9 122.3 1227.7 127.0 1228.5 131.7 1229.3 136.6 1230.2 141.6 1231.0 146.6 1231.8 151.7 1232.6 156.9 1233.4 162.2 1234.2 167.5 1235.0 172.9 1235.8 178.4 1236.6 183.9 1237.4 189.4 1238.2 195.0 1239.0 200.6 1239.8 206.3 1240.6 211.9 1241.4 217.6 1242.2 223.3 1243.0 229.0 1243.8 234.7 1244.6 240.4 1245.4 246.1 1246.2 251.7 1247.0 257.4 1247.8 263.0 1248.6 268.6 1249.4 274.1 1250.2 279.6 1251.0 285.1 1251.8 290.5 1252.6 295.8 1253.4 301.1 1254.2 306.3 1255.0 311.4 1255.8 316.4 1256.7 321.4 1257.5 326.3 1258.3 331.0 1259.1 335.7 1259.9 340.2 1260.7 344.7 1261.5 349.0 1262.3 353.2 1263.1 357.3 1263.9 361.3 1264.7 365.1 1265.5 368.8 1266.3 372.4 1267.1 375.8 1267.9 379.1 1268.7 382.2 1269.5 385.2 1270.3 388.0 1271.1 390.7 1271.9 393.2 1272.7 395.6 1273.5 397.8 1274.3 399.8 1275.1 401.6 1275.9 403.3 1276.7 404.8 1277.5 406.1 1278.3 407.3 1279.1 408.3 1279.9 409.1 1280.7 409.7 1281.5 410.1 1282.3 410.4 1283.1 410.5 1284.0 410.4 1284.8 410.1 1285.6 409.7 1286.4 409.1 1287.2 408.3 1288.0 407.3 1288.8 406.1 1289.6 404.8 1290.4 403.3 1291.2 401.6 1292.0 399.8 1292.8 397.8 1293.6 395.6 1294.4 393.2 1295.2 390.7 1296.0 388.0 1296.8 385.2 1297.6 382.2 1298.4 379.1 1299.2 375.8 1300.0 372.4 1300.8 368.8 1301.6 365.1 1302.4 361.3 1303.2 357.3 1304.0 353.2 1304.8 349.0 1305.6 344.7 1306.4 340.2 1307.2 335.7 1308.0 331.0 1308.8 326.3 1309.6 321.4 1310.5 316.4 1311.3 311.4 1312.1 306.3 1312.9 301.1 1313.7 295.8 1314.5 290.5 1315.3 285.1 1316.1 279.6 1316.9 274.1 1317.7 268.6 1318.5 263.0 1319.3 257.4 1320.1 251.7 1320.9 246.1 1321.7 240.4 1322.5 234.7 1323.3 229.0 1324.1 223.3 1324.9 217.6 1325.7 211.9 1326.5 206.3 1327.3 200.6 1328.1 195.0 1328.9 189.4 1329.7 183.9 1330.5 178.4 1331.3 172.9 1332.1 167.5 1332.9 162.2 1333.7 156.9 1334.5 151.7 1335.3 146.6 1336.1 141.6 1337.0 136.6 1337.8 131.7 1338.6 127.0 1339.4 122.3 1340.2 117.8 1341.0 113.3 1341.8 109.0 1342.6 104.8 1343.4 100.7 1344.2 96.7 1345.0 92.9 1345.8 89.2 1346.6 85.6 1347.4 82.2 1348.2 78.9 1349.0 75.8 1349.8 72.8 1350.6 70.0 1351.4 67.3 1352.2 64.8 1353.0 62.4 1353.8 60.2 1354.6 58.2 1355.4 56.4 1356.2 54.7 1357.0 53.2 1357.8 51.9 1358.6 50.7 1359.4 49.7 1360.2 48.9 1361.0 48.3 1361.8 47.9 1362.6 47.6 1363.4 47.5 1364.3 47.6 1365.1 47.9 1365.9 48.3 1366.7 48.9 1367.5 49.7 1368.3 50.7 1369.1 51.9 1369.9 53.2 1370.7 54.7 1371.5 56.4 1372.3 58.2 1373.1 60.2 1373.9 62.4 1374.7 64.8 1375.5 67.3 1376.3 70.0 1377.1 72.8 1377.9 75.8 1378.7 78.9 1379.5 82.2 1380.3 85.6 1381.1 89.2 1381.9 92.9 1382.7 96.7 1383.5 100.7 1384.3 104.8 1385.1 109.0 1385.9 113.3 1386.7 117.8 1387.5 122.3 1388.3 127.0 1389.1 131.7 1389.9 136.6 1390.8 141.6 1391.6 146.6 1392.4 151.7 1393.2 156.9 1394.0 162.2 1394.8 167.5 1395.6 172.9 1396.4 178.4 1397.2 183.9 1398.0 189.4 1398.8 195.0 1399.6 200.6 1400.4 206.3 1401.2 211.9 1402.0 217.6 1402.8 223.3 1403.6 229.0 1404.4 234.7 1405.2 240.4 1406.0 246.1 1406.8 251.7 1407.6 257.4 1408.4 263.0 1409.2 268.6 1410.0 274.1 1410.8 279.6 1411.6 285.1 1412.4 290.5 1413.2 295.8 1414.0 301.1 1414.8 306.3 1415.6 311.4 1416.4 316.4 1417.3 321.4 1418.1 326.3 1418.9 331.0 1419.7 335.7 1420.5 340.2 1421.3 344.7 1422.1 349.0 1422.9 353.2 1423.7 357.3 1424.5 361.3 1425.3 365.1 1426.1 368.8 1426.9 372.4 1427.7 375.8 1428.5 379.1 1429.3 382.2 1430.1 385.2 1430.9 388.0 1431.7 390.7 1432.5 393.2 1433.3 395.6 1434.1 397.8 1434.9 399.8 1435.7 401.6 1436.5 403.3 1437.3 404.8 1438.1 406.1 1438.9 407.3 1439.7 408.3 1440.5 409.1 1441.3 409.7 1442.1 410.1 1442.9 410.4 1443.8 410.5 1444.6 410.4 1445.4 410.1 1446.2 409.7 1447.0 409.1 1447.8 408.3 1448.6 407.3 1449.4 406.1 1450.2 404.8 1451.0 403.3 1451.8 401.6 1452.6 399.8 1453.4 397.8 1454.2 395.6 1455.0 393.2 1455.8 390.7 1456.6 388.0 1457.4 385.2 1458.2 382.2 1459.0 379.1 1459.8 375.8 1460.6 372.4 1461.4 368.8 1462.2 365.1 1463.0 361.3 1463.8 357.3 1464.6 353.2 1465.4 349.0 1466.2 344.7 1467.0 340.2 1467.8 335.7 1468.6 331.0 1469.4 326.3 1470.2 321.4 1471.1 316.4 1471.9 311.4 1472.7 306.3 1473.5 301.1 1474.3 295.8 1475.1 290.5 1475.9 285.1 1476.7 279.6 1477.5 274.1 1478.3 268.6 1479.1 263.0 1479.9 257.4 1480.7 251.7 1481.5 246.1 1482.3 240.4 1483.1 234.7 1483.9 229.0 1484.7 223.3 1485.5 217.6 1486.3 211.9 1487.1 206.3 1487.9 200.6 1488.7 195.0 1489.5 189.4 1490.3 183.9 1491.1 178.4 1491.9 172.9 1492.7 167.5 1493.5 162.2 1494.3 156.9 1495.1 151.7 1495.9 146.6 1496.7 141.6 1497.6 136.6 1498.4 131.7 1499.2 127.0 1500.0 122.3 1500.8 117.8 1501.6 113.3 1502.4 109.0 1503.2 104.8 1504.0 100.7 1504.8 96.7 1505.6 92.9 1506.4 89.2 1507.2 85.6 1508.0 82.2 1508.8 78.9 1509.6 75.8 1510.4 72.8 1511.2 70.0 1512.0 67.3 1512.8 64.8 1513.6 62.4 1514.4 60.2 1515.2 58.2 1516.0 56.4 1516.8 54.7 1517.6 53.2 1518.4 51.9 1519.2 50.7 1520.0 49.7 1520.8 48.9 1521.6 48.3 1522.4 47.9 1523.2 47.6 1524.0 47.5 1524.9 47.6 1525.7 47.9 1526.5 48.3 1527.3 48.9 1528.1 49.7 1528.9 50.7 1529.7 51.9 1530.5 53.2 1531.3 54.7 1532.1 56.4 1532.9 58.2 1533.7 60.2 1534.5 62.4 1535.3 64.8 1536.1 67.3 1536.9 70.0 1537.7 72.8 1538.5 75.8 1539.3 78.9 1540.1 82.2 1540.9 85.6 1541.7 89.2 1542.5 92.9 1543.3 96.7 1544.1 100.7 1544.9 104.8 1545.7 109.0 1546.5 113.3 1547.3 117.8 1548.1 122.3 1548.9 127.0 1549.7 131.7 1550.5 136.6 1551.4 141.6 1552.2 146.6 1553.0 151.7 1553.8 156.9 1554.6 162.2 1555.4 167.5 1556.2 172.9 1557.0 178.4 1557.8 183.9 1558.6 189.4 1559.4 195.0 1560.2 200.6 1561.0 206.3 1561.8 211.9 1562.6 217.6 1563.4 223.3 1564.2 229.0 1565.0 234.7 1565.8 240.4 1566.6 246.1 1567.4 251.7 1568.2 257.4 1569.0 263.0 1569.8 268.6 1570.6 274.1 1571.4 279.6 1572.2 285.1 1573.0 290.5 1573.8 295.8 1574.6 301.1 1575.4 306.3 1576.2 311.4 1577.0 316.4 1577.9 321.4 1578.7 326.3 1579.5 331.0 1580.3 335.7 1581.1 340.2 1581.9 344.7 1582.7 349.0 1583.5 353.2 1584.3 357.3 1585.1 361.3 1585.9 365.1 1586.7 368.8 1587.5 372.4 1588.3 375.8 1589.1 379.1 1589.9 382.2 1590.7 385.2 1591.5 388.0 1592.3 390.7 1593.1 393.2 1593.9 395.6 1594.7 397.8 1595.5 399.8 1596.3 401.6 1597.1 403.3 1597.9 404.8 1598.7 406.1 1599.5 407.3 1600.3 408.3 1601.1 409.1 1601.9 409.7 1602.7 410.1 1603.5 410.4 1604.3 410.5 1605.2 410.4 1606.0 410.1 1606.8 409.7 1607.6 409.1 1608.4 408.3 1609.2 407.3 1610.0 406.1 1610.8 404.8 1611.6 403.3 1612.4 401.6 1613.2 399.8 1614.0 397.8 1614.8 395.6 1615.6 393.2 1616.4 390.7 1617.2 388.0 1618.0 385.2 1618.8 382.2 1619.6 379.1 1620.4 375.8 1621.2 372.4 1622.0 368.8 1622.8 365.1 1623.6 361.3 1624.4 357.3 1625.2 353.2 1626.0 349.0 1626.8 344.7 1627.6 340.2 1628.4 335.7 1629.2 331.0 1630.0 326.3 1630.8 321.4 1631.7 316.4 1632.5 311.4 1633.3 306.3 1634.1 301.1 1634.9 295.8 1635.7 290.5 1636.5 285.1 1637.3 279.6 1638.1 274.1 1638.9 268.6 1639.7 263.0 1640.5 257.4 1641.3 251.7 1642.1 246.1 1642.9 240.4 1643.7 234.7 1644.5 229.0" fill="none" stroke="#0000ff" stroke-width="1" shape-rendering="crispEdges"/>
  <path d="M38.5 195.6 L39.5 211.9 L43.8 195.6 L75.3 195.6 L79.5 229.0 L113.7 229.0 L116.9 204.7 L118.8 204.7 L121.9 229.0 L155.9 229.0 L160.9 195.6 L197.5 195.6 L201.0 210.8 L204.2 195.6 L235.9 195.6 L240.1 229.0 L274.3 229.0 L277.5 204.7 L279.4 204.7 L282.5 229.0 L316.5 229.0 L321.5 195.6 L358.1 195.6 L361.6 210.8 L364.8 195.6 L396.5 195.6 L400.7 229.0 L434.9 229.0 L438.1 204.7 L440.0 204.7 L443.1 229.0 L477.1 229.0 L482.1 195.6 L518.7 195.6 L522.2 210.8 L525.4 195.6 L557.1 195.6 L561.3 229.0 L595.5 229.0 L598.7 204.7 L600.6 204.7 L603.7 229.0 L637.7 229.0 L642.7 195.6 L679.3 195.6 L682.8 210.8 L686.0 195.6 L717.7 195.6 L721.9 229.0 L756.1 229.0 L759.3 204.7 L761.2 204.7 L764.3 229.0 L798.3 229.0 L803.3 195.6 L839.9 195.6 L843.4 210.8 L846.6 195.6 L878.3 195.6 L882.5 229.0 L916.7 229.0 L919.9 204.7 L921.8 204.7 L924.9 229.0 L958.9 229.0 L963.9 195.6 L1000.5 195.6 L1004.0 210.8 L1007.2 195.6 L1038.9 195.6 L1043.1 229.0 L1077.3 229.0 L1080.5 204.7 L1082.4 204.7 L1085.5 229.0 L1119.5 229.0 L1124.5 195.6 L1161.1 195.6 L1164.6 210.8 L1167.8 195.6 L1199.5 195.6 L1203.7 229.0 L1237.9 229.0 L1241.1 204.7 L1243.0 204.7 L1246.1 229.0 L1280.1 229.0 L1285.1 195.6 L1321.7 195.6 L1325.2 210.8 L1328.4 195.6 L1360.1 195.6 L1364.3 229.0 L1398.5 229.0 L1401.7 204.7 L1403.6 204.7 L1406.7 229.0 L1440.7 229.0 L1445.7 195.6 L1482.3 195.6 L1485.8 210.8 L1489.0 195.6 L1520.7 195.6 L1524.9 229.0 L1559.1 229.0 L1562.3 204.7 L1564.2 204.7 L1567.3 229.0 L1601.3 229.0 L1606.3 195.6 L1644.5 195.6" fill="none" stroke="#ff0000" stroke-width="1" shape-rendering="crispEdges"/>
</svg>
<div class="yl" style="top:39px">5V</div>
<div class="yl" style="top:75px">4V</div>
<div class="yl" style="top:112px">3V</div>
<div class="yl" style="top:148px">2V</div>
<div class="yl" style="top:184px">1V</div>
<div class="yl" style="top:221px">0V</div>
<div class="yl" style="top:257px">-1V</div>
<div class="yl" style="top:293px">-2V</div>
<div class="yl" style="top:329px">-3V</div>
<div class="yl" style="top:366px">-4V</div>
<div class="yl" style="top:402px">-5V</div>
<div class="xl" style="left:38px">0ms</div>
<div class="xl" style="left:199px">10ms</div>
<div class="xl" style="left:359px">20ms</div>
<div class="xl" style="left:520px">30ms</div>
<div class="xl" style="left:680px">40ms</div>
<div class="xl" style="left:841px">50ms</div>
<div class="xl" style="left:1002px">60ms</div>
<div class="xl" style="left:1162px">70ms</div>
<div class="xl" style="left:1323px">80ms</div>
<div class="xl" style="left:1483px">90ms</div>
<div class="xl" style="left:1644px">100ms</div>
<div class="a" style="left:281px;top:30px;font-size:14px;line-height:15px;font-weight:bold;letter-spacing:-0.5px;color:#00ff00">V(n002)</div>
<div class="a" style="left:816px;top:30px;font-size:14px;line-height:15px;font-weight:bold;letter-spacing:-0.5px;color:#0000ff">V(n005)</div>
<div class="a" style="left:1351px;top:30px;font-size:14px;line-height:15px;font-weight:bold;letter-spacing:-0.5px;color:#ff0000">V(n006)</div>

<!-- separator -->
<div class="a" style="left:0;top:444px;width:1676px;height:1px;background:#f0f4f8"></div>
<div class="a" style="left:0;top:445px;width:1676px;height:2px;background:#303030"></div>

<!-- ================= BOTTOM WINDOW (schematic) ================= -->
<div class="a" style="left:0;top:447px;width:1676px;height:447px;background:#bad0ea"></div>
<div class="a" style="left:1px;top:447px;width:1674px;height:31px;background:linear-gradient(#98b2d0,#c4d8ee);border-radius:5px 5px 0 0;border-top:1px solid #fff"></div>
<div class="a" style="left:30px;top:458px;font-size:12px;line-height:14px;color:#1a1020;letter-spacing:-0.25px">Draft1.asc</div>
<svg class="a" style="left:10px;top:454px" width="16" height="20" viewBox="0 0 16 20">
  <path d="M2 9.5 H6" stroke="#0000ff" stroke-width="1.2"/>
  <path d="M6.5 5 V14" stroke="#0000ff" stroke-width="2.2"/>
  <path d="M7 7 L12 2" stroke="#0000ff" stroke-width="1.2"/>
  <path d="M7 12 L12.8 17.6" stroke="#0000ff" stroke-width="1.2"/>
  <path d="M9.2 16.2 L12.2 14.6 L11.2 17.2 Z" fill="#0000ff" stroke="#0000ff" stroke-width="1"/>
</svg>
<div class="tb2" style="left:1569px"></div>
<div class="tb2" style="left:1602px"></div>
<div class="tb2" style="left:1635px;border-color:#5a2028;background:linear-gradient(#e8a89a 0%,#d97b68 45%,#c0462e 55%,#d9805e 100%)"></div>
<svg class="a" style="left:1560px;top:446px" width="116" height="32" viewBox="0 0 116 32"><rect x="19.6" y="18.6" width="10" height="3.8" rx="1.2" fill="#f4f4f4" stroke="#3a3f55" stroke-width="1.3"/><rect x="52.6" y="14.6" width="9.8" height="7.8" rx="1" fill="#f4f4f4" stroke="#3a3f55" stroke-width="1.3"/><rect x="55.6" y="17.2" width="3.8" height="2.2" fill="#a9bdd6" stroke="#3a3f55" stroke-width="1.1"/><path d="M87 15.9 L94.6 21.3 M94.6 15.9 L87 21.3" stroke="#3a3f55" stroke-width="4.2" stroke-linecap="square"/><path d="M87 15.9 L94.6 21.3 M94.6 15.9 L87 21.3" stroke="#f6f6f6" stroke-width="2.2" stroke-linecap="square"/></svg>
<!-- canvas bevel -->
<div class="a" style="left:8px;top:476px;width:1660px;height:411px;background:#fff"></div>
<div class="a" style="left:8px;top:476px;width:1659px;height:410px;background:#e0e0e0"></div>
<div class="a" style="left:8px;top:476px;width:1658px;height:409px;background:#a0a0a0"></div>
<div class="a" style="left:9px;top:477px;width:1657px;height:408px;background:#696969"></div>
<div class="a" style="left:10px;top:478px;width:1656px;height:407px;background:#c0c0c0"></div>
<!-- frame edges -->
<div class="a" style="left:0;top:893px;width:1676px;height:1px;background:#22d3e8"></div>
<div class="a" style="left:1674px;top:447px;width:1px;height:447px;background:#3fd0ea"></div>
<div class="a" style="left:1675px;top:447px;width:1px;height:447px;background:#000"></div>
<div class="a" style="left:1px;top:0;width:1px;height:445px;background:#fff"></div>
<div class="a" style="left:1px;top:447px;width:1px;height:447px;background:#fff"></div>
<div class="a" style="left:0;top:0;width:1px;height:894px;background:repeating-linear-gradient(#1a1a1a 0 1px,#1fb5b0 1px 2px)"></div>

<div class="sch" style="left:714.2px;top:505.9px;letter-spacing:0px;">R2</div>
<div class="sch" style="left:716.7px;top:560.4px;letter-spacing:0px;">10</div>
<div class="sch" style="left:602.7px;top:591.9px;letter-spacing:0px;">.tran 0.1</div>
<div class="sch" style="left:817.7px;top:550.4px;letter-spacing:0px;">R3</div>
<div class="sch" style="left:819.4px;top:604.4px;letter-spacing:0px;">10</div>
<div class="sch" style="left:816.0px;top:621.7px;letter-spacing:0px;">V2</div>
<div class="sch" style="left:624.9px;top:650.2px;letter-spacing:0px;">V1</div>
<div class="sch" style="left:816.2px;top:694.1px;letter-spacing:0.1px;">SINE(0 5 100 0 0 0 10)</div>
<div class="sch" style="left:625.4px;top:723.3px;letter-spacing:0.1px;">SINE(0 5 200 0 0 0 20)</div>
<div class="sch" style="left:1087.4px;top:599.2px;letter-spacing:0px;">A1</div>
<div class="sch" style="left:1211.7px;top:518.7px;letter-spacing:0px;">V3</div>
<div class="sch" style="left:1213.0px;top:592.5px;letter-spacing:0px;">10</div>
<div class="sch" style="left:1120.4px;top:687.4px;letter-spacing:0px;">R1</div>
<div class="sch" style="left:1121.0px;top:720.7px;letter-spacing:0px;">10</div>
<svg class="a" style="left:0;top:0" width="1676" height="894" viewBox="0 0 1676 894"><path d="M604.5 663.5 L604.5 633.5 L692.5 633.5 L692.5 545.5" fill="none" stroke="#0000ff" stroke-width="1" shape-rendering="crispEdges"/>
<path d="M766.5 545.5 L898.5 545.5 L898.5 633.5 L1030.5 633.5" fill="none" stroke="#0000ff" stroke-width="1" shape-rendering="crispEdges"/>
<path d="M869.5 589.5 L869.5 662.5 L1030.5 662.5" fill="none" stroke="#0000ff" stroke-width="1" shape-rendering="crispEdges"/>
<path d="M795.5 589.5 L795.5 633.5" fill="none" stroke="#0000ff" stroke-width="1" shape-rendering="crispEdges"/>
<path d="M795.5 706.5 L795.5 838.5" fill="none" stroke="#0000ff" stroke-width="1" shape-rendering="crispEdges"/>
<path d="M795.5 706.5 L692.5 706.5 L692.5 794.5 L604.5 794.5 L604.5 735.5" fill="none" stroke="#0000ff" stroke-width="1" shape-rendering="crispEdges"/>
<path d="M1088.5 633.5 L1088.5 530.5 L1191.5 530.5" fill="none" stroke="#0000ff" stroke-width="1" shape-rendering="crispEdges"/>
<path d="M1191.5 603.5 L1191.5 750.5 L1059.5 750.5 L1059.5 677.5" fill="none" stroke="#0000ff" stroke-width="1" shape-rendering="crispEdges"/>
<path d="M1103.5 662.5 L1103.5 676.5" fill="none" stroke="#0000ff" stroke-width="1" shape-rendering="crispEdges"/>
<path d="M1103.5 750.5 L1103.5 765.5" fill="none" stroke="#0000ff" stroke-width="1" shape-rendering="crispEdges"/>
<path d="M692.5 545.5 L700.5 545.5 L707.5 530.5 L722.5 560.5 L736.5 530.5 L751.5 560.5 L758.5 545.5 L766.5 545.5" fill="none" stroke="#000080" stroke-width="1" shape-rendering="crispEdges"/>
<path d="M795.5 589.5 L803.5 589.5 L810.5 574.5 L825.5 604.5 L839.5 574.5 L854.5 604.5 L861.5 589.5 L869.5 589.5" fill="none" stroke="#000080" stroke-width="1" shape-rendering="crispEdges"/>
<path d="M1103.5 676.5 L1103.5 684.5 L1118.5 691.5 L1088.5 706.5 L1118.5 720.5 L1088.5 735.5 L1103.5 742.5 L1103.5 750.5" fill="none" stroke="#000080" stroke-width="1" shape-rendering="crispEdges"/>
<circle cx="604.5" cy="699.5" r="28.8" fill="none" stroke="#000080" stroke-width="1" shape-rendering="crispEdges"/><path d="M604.5 663 V670.7 M604.5 727.3 V735.5 M597 681.5 H613 M604.5 675 V689 M597 717.5 H613" fill="none" stroke="#000080" stroke-width="1" shape-rendering="crispEdges"/>
<circle cx="795.5" cy="669.5" r="28.8" fill="none" stroke="#000080" stroke-width="1" shape-rendering="crispEdges"/><path d="M795.5 633 V640.7 M795.5 697.3 V705.5 M788 651.5 H804 M795.5 645 V659 M788 687.5 H804" fill="none" stroke="#000080" stroke-width="1" shape-rendering="crispEdges"/>
<circle cx="1191.5" cy="566.5" r="28.8" fill="none" stroke="#000080" stroke-width="1" shape-rendering="crispEdges"/><path d="M1191.5 530 V537.7 M1191.5 594.3 V602.5 M1184 548.5 H1200 M1191.5 542 V556 M1184 584.5 H1200" fill="none" stroke="#000080" stroke-width="1" shape-rendering="crispEdges"/>
<path d="M1030 633.5 H1038.5 M1033 648.5 H1041 M1030 662.5 H1038.5" fill="none" stroke="#000080" stroke-width="1" shape-rendering="crispEdges"/>
<path d="M1032.5 620 Q1049 648.5 1032.5 677" fill="none" stroke="#000080" stroke-width="1" shape-rendering="crispEdges"/>
<path d="M1042.5 618 Q1061 648.5 1042.5 678" fill="none" stroke="#000080" stroke-width="1" shape-rendering="crispEdges"/>
<path d="M1040 618.5 H1054 C1071 618.5 1087 631 1095.5 648.5 C1087 665 1071 677.5 1054 677.5 H1040" fill="none" stroke="#000080" stroke-width="1" shape-rendering="crispEdges"/>
<circle cx="1095.5" cy="662.5" r="7" fill="none" stroke="#000080" stroke-width="1" shape-rendering="crispEdges"/>
<rect x="1027.7" y="615.7" width="4.6" height="4.6" fill="#e8e8e8" stroke="#0000ff" stroke-width="1.4"/>
<rect x="1027.7" y="645.7" width="4.6" height="4.6" fill="#e8e8e8" stroke="#0000ff" stroke-width="1.4"/>
<rect x="1027.7" y="674.7" width="4.6" height="4.6" fill="#e8e8e8" stroke="#0000ff" stroke-width="1.4"/>
<rect x="791" y="702" width="9" height="9" fill="#0000ff"/>
<rect x="1099" y="746" width="9" height="9" fill="#0000ff"/>
<path d="M1086.5 765.5 H1119.5 L1103.5 781.5 Z" fill="none" stroke="#0000ff" stroke-width="1" shape-rendering="crispEdges"/>
<path d="M778.5 838.5 H811.5 L795.5 855 Z" fill="none" stroke="#0000ff" stroke-width="1" shape-rendering="crispEdges"/></svg>

</body></html>
